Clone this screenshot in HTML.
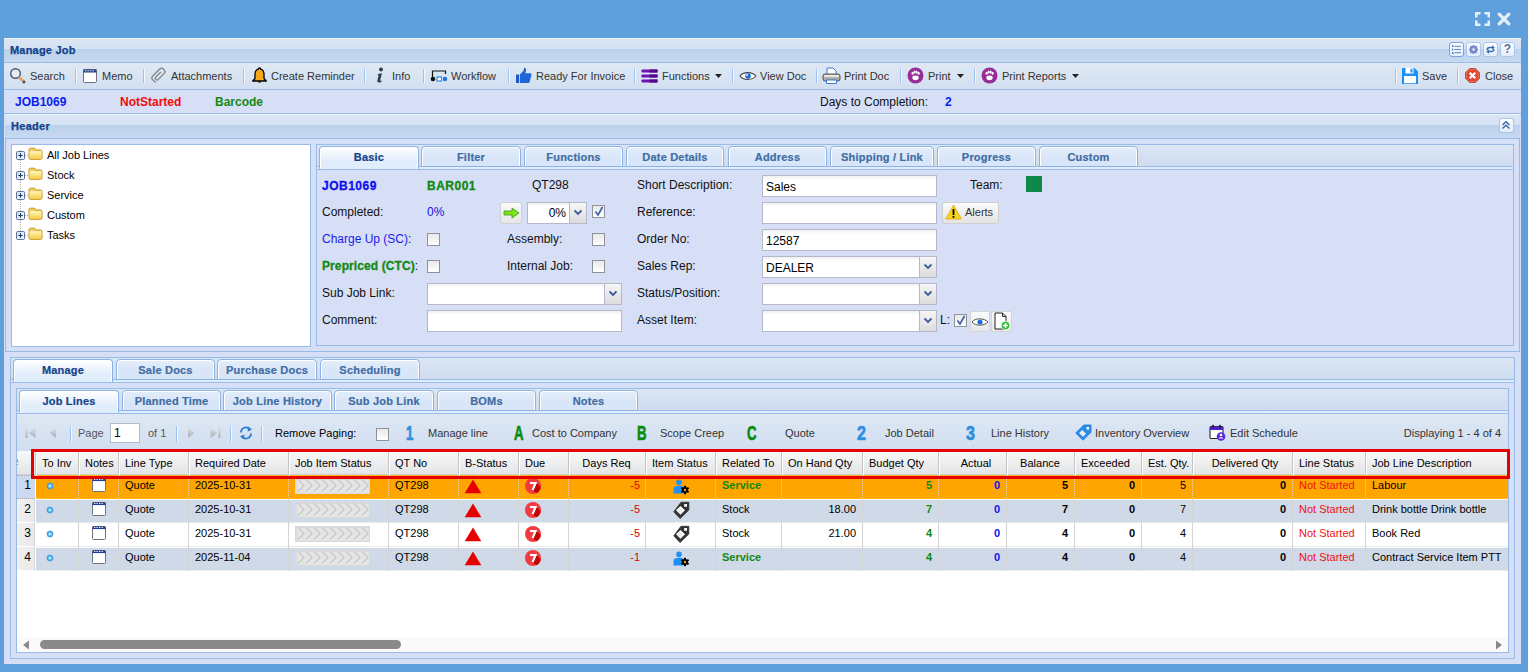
<!DOCTYPE html>
<html><head><meta charset="utf-8"><style>
html,body{margin:0;padding:0;}
body{width:1528px;height:672px;overflow:hidden;position:relative;background:#5fa0dc;font-family:"Liberation Sans",sans-serif;}
</style></head><body>
<svg style="position:absolute;left:1474px;top:11px" width="17" height="16" viewBox="0 0 17 16"><g fill="#e6eff8"><path d="M1 1h5.5v2.5h-3v3h-2.5z"/><path d="M16 1h-5.5v2.5h3v3h2.5z"/><path d="M1 15h5.5v-2.5h-3v-3h-2.5z"/><path d="M16 15h-5.5v-2.5h3v-3h2.5z"/></g></svg><svg style="position:absolute;left:1497px;top:12px" width="14" height="14" viewBox="0 0 14 14"><path d="M2.2 2.2L11.8 11.8M11.8 2.2L2.2 11.8" stroke="#e6eff8" stroke-width="3.2" stroke-linecap="round"/></svg><div style="position:absolute;left:4px;top:38px;width:1517px;height:626px;background:#d6dff6;"></div><div style="position:absolute;left:4px;top:38px;width:1517px;height:25px;background:linear-gradient(#eef4fb 0px,#eef4fb 1px,#dae6f4 1px,#d5e2f2 11px,#bcd1ec 11px,#c6d9f0 24px,#99bbe8 24px);"></div><span style="position:absolute;left:10px;top:43px;font-size:11px;line-height:14px;color:#15428b;font-weight:bold;white-space:nowrap;letter-spacing:0.2px;-webkit-text-stroke:0.25px #15428b;">Manage Job</span><div style="position:absolute;left:1449px;top:42px;width:13px;height:13px;border:1px solid #7aa5dc;border-radius:3px;background:linear-gradient(#fbfdff,#e3eefb);"></div><div style="position:absolute;left:1466px;top:42px;width:13px;height:13px;border:1px solid #a9c6ec;border-radius:3px;background:linear-gradient(#fbfdff,#e3eefb);"></div><div style="position:absolute;left:1483px;top:42px;width:13px;height:13px;border:1px solid #a9c6ec;border-radius:3px;background:linear-gradient(#fbfdff,#e3eefb);"></div><div style="position:absolute;left:1500px;top:42px;width:13px;height:13px;border:1px solid #a9c6ec;border-radius:3px;background:linear-gradient(#fbfdff,#e3eefb);"></div><svg style="position:absolute;left:1451px;top:44px" width="11" height="11" viewBox="0 0 11 11"><g fill="#4a7cc0"><rect x="1" y="1" width="1.2" height="2"/><rect x="1" y="4.5" width="1.2" height="2"/><rect x="1" y="8" width="1.2" height="2"/><rect x="1" y="1.5" width="1.5" height="1"/><rect x="1" y="9" width="1.5" height="1"/></g><g fill="#5a88c8"><rect x="3.5" y="1.8" width="6.5" height="1"/><rect x="3.5" y="5" width="6.5" height="1"/><rect x="3.5" y="8.2" width="6.5" height="1"/></g></svg><svg style="position:absolute;left:1468px;top:44px" width="11" height="11" viewBox="0 0 11 11"><g transform="translate(5.5,5.5)"><circle r="3.3" fill="#7f8ed3"/><g fill="#7f8ed3"><rect x="-1" y="-4.5" width="2" height="2" transform="rotate(0)"/><rect x="-1" y="-4.5" width="2" height="2" transform="rotate(45)"/><rect x="-1" y="-4.5" width="2" height="2" transform="rotate(90)"/><rect x="-1" y="-4.5" width="2" height="2" transform="rotate(135)"/><rect x="-1" y="-4.5" width="2" height="2" transform="rotate(180)"/><rect x="-1" y="-4.5" width="2" height="2" transform="rotate(225)"/><rect x="-1" y="-4.5" width="2" height="2" transform="rotate(270)"/><rect x="-1" y="-4.5" width="2" height="2" transform="rotate(315)"/></g><circle r="1.2" fill="#e8efff"/><circle r="3.3" fill="none" stroke="#6272b8" stroke-width="0.5"/></g></svg><svg style="position:absolute;left:1485px;top:44px" width="11" height="11" viewBox="0 0 11 11"><g fill="none" stroke="#3d6aa8" stroke-width="1.3"><path d="M2 6 C2 4 3 3.5 5 3.5 H7.5"/><path d="M9 5 C9 7 8 7.5 6 7.5 H3.5"/></g><path d="M7 1.3 L9.8 3.5 L7 5.7z" fill="#3d6aa8"/><path d="M4 5.3 L1.2 7.5 L4 9.7z" fill="#3d6aa8"/></svg><span style="position:absolute;left:1501px;top:41px;width:13px;text-align:center;font-size:12px;line-height:16px;font-weight:bold;color:#4e73a8">?</span><div style="position:absolute;left:4px;top:63px;width:1517px;height:27px;background:linear-gradient(#dfe9f5,#d2dff0 26px,#99bbe8 26px);"></div><div style="position:absolute;left:4px;top:90px;width:1517px;height:24px;background:linear-gradient(#d6dff6 23px,#99bbe8 23px);"></div><div style="position:absolute;left:5px;top:114px;width:1515px;height:238px;border-left:1px solid #99bbe8;border-right:1px solid #99bbe8;border-bottom:1px solid #99bbe8;box-sizing:border-box;"></div><div style="position:absolute;left:5px;top:114px;width:1515px;height:25px;background:linear-gradient(#eef4fb 0px,#eef4fb 1px,#dae6f4 1px,#d5e2f2 11px,#bcd1ec 11px,#c6d9f0 24px,#99bbe8 24px);"></div><span style="position:absolute;left:11px;top:119px;font-size:11px;line-height:14px;color:#15428b;font-weight:bold;white-space:nowrap;letter-spacing:0.3px;-webkit-text-stroke:0.25px #15428b;">Header</span><div style="position:absolute;left:1499px;top:118px;width:13px;height:13px;border:1px solid #a9c6ec;border-radius:3px;background:linear-gradient(#fbfdff,#e3eefb);"></div><svg style="position:absolute;left:1501px;top:120px" width="10" height="10" viewBox="0 0 10 10"><path d="M1.5 5 L5 1.8 L8.5 5 M1.5 8.5 L5 5.3 L8.5 8.5" fill="none" stroke="#3f6ba6" stroke-width="1.5"/></svg><svg style="position:absolute;left:9px;top:67px" width="18" height="18" viewBox="0 0 18 18"><circle cx="6.5" cy="6.5" r="4.8" fill="#e8ecf2" stroke="#41577e" stroke-width="1.4"/><path d="M10 10 L15.5 15.5" stroke="#e2a65c" stroke-width="2.6" stroke-linecap="butt"/><path d="M14.2 14.2 L15.8 15.8" stroke="#3b4c66" stroke-width="2.6"/></svg><span style="position:absolute;left:30px;top:69px;font-size:11px;line-height:14px;color:#333333;white-space:nowrap;">Search</span><div style="position:absolute;left:75px;top:69px;width:1px;height:14px;background:#9cc2ef;box-shadow:1px 0 0 #f4f8fd;"></div><svg style="position:absolute;left:83px;top:69px" width="15" height="15" viewBox="0 0 15 15"><rect x="0.5" y="0.5" width="13" height="13" rx="1" fill="#fff" stroke="#6d7077"/><rect x="0.5" y="0.5" width="13" height="3" fill="#1f3f8f"/><g fill="#fff"><rect x="2" y="1.3" width="1.4" height="1"/><rect x="4.5" y="1.3" width="1.4" height="1"/><rect x="7" y="1.3" width="1.4" height="1"/><rect x="9.5" y="1.3" width="1.4" height="1"/></g></svg><span style="position:absolute;left:102px;top:69px;font-size:11px;line-height:14px;color:#333333;white-space:nowrap;">Memo</span><div style="position:absolute;left:143px;top:69px;width:1px;height:14px;background:#9cc2ef;box-shadow:1px 0 0 #f4f8fd;"></div><svg style="position:absolute;left:150px;top:67px" width="18" height="18" viewBox="0 0 18 18"><path d="M5.5 15.5 L2.6 12.6 C1.6 11.6 1.6 10.2 2.6 9.2 L9.8 2 C10.8 1 12.2 1 13.2 2 L14.2 3 C15.2 4 15.2 5.4 14.2 6.4 L8 12.6 C7.4 13.2 6.6 13.2 6 12.6 L5.6 12.2 C5 11.6 5 10.8 5.6 10.2 L11 4.8" fill="none" stroke="#7d7d7d" stroke-width="1.2"/></svg><span style="position:absolute;left:171px;top:69px;font-size:11px;line-height:14px;color:#333333;white-space:nowrap;">Attachments</span><div style="position:absolute;left:243px;top:69px;width:1px;height:14px;background:#9cc2ef;box-shadow:1px 0 0 #f4f8fd;"></div><svg style="position:absolute;left:251px;top:67px" width="17" height="17" viewBox="0 0 17 17"><path d="M8.5 1 C9.3 1 9.7 1.5 9.7 2.2 C12 2.8 13 4.8 13 7.5 L13 11.5 L15.3 14 L1.7 14 L4 11.5 L4 7.5 C4 4.8 5 2.8 7.3 2.2 C7.3 1.5 7.7 1 8.5 1z" fill="#f7a81b" stroke="#000" stroke-width="1.3" stroke-linejoin="round"/><path d="M6.5 14.5 C6.7 16 10.3 16 10.5 14.5z" fill="#000"/></svg><span style="position:absolute;left:271px;top:69px;font-size:11px;line-height:14px;color:#333333;white-space:nowrap;">Create Reminder</span><div style="position:absolute;left:364px;top:69px;width:1px;height:14px;background:#9cc2ef;box-shadow:1px 0 0 #f4f8fd;"></div><svg style="position:absolute;left:375px;top:67px" width="10" height="17" viewBox="0 0 10 17"><circle cx="6" cy="2.6" r="2" fill="#2d3e52"/><path d="M3 7 L7 6.3 L5.2 13 C5 13.8 5.6 14 6.8 13.4 L6.3 14.9 C4.5 16 1.8 15.8 2.3 13.6 L3.7 8.4 L2.8 8.4z" fill="#2d3e52"/></svg><span style="position:absolute;left:392px;top:69px;font-size:11px;line-height:14px;color:#333333;white-space:nowrap;">Info</span><div style="position:absolute;left:423px;top:69px;width:1px;height:14px;background:#9cc2ef;box-shadow:1px 0 0 #f4f8fd;"></div><svg style="position:absolute;left:430px;top:69px" width="18" height="13" viewBox="0 0 18 13"><path d="M2.5 10.5 V2 H15.5 V5" fill="none" stroke="#111" stroke-width="1.2"/><circle cx="3" cy="10" r="2.3" fill="#111"/><rect x="7" y="8" width="4.5" height="4" fill="#fff" stroke="#2d8fe6" stroke-width="1.2"/><circle cx="15" cy="10" r="2.2" fill="#1f6fdc"/></svg><span style="position:absolute;left:451px;top:69px;font-size:11px;line-height:14px;color:#333333;white-space:nowrap;">Workflow</span><div style="position:absolute;left:508px;top:69px;width:1px;height:14px;background:#9cc2ef;box-shadow:1px 0 0 #f4f8fd;"></div><svg style="position:absolute;left:515px;top:67px" width="18" height="17" viewBox="0 0 18 17"><rect x="1" y="7.5" width="3.2" height="8.5" fill="#1a5ccf"/><path d="M5 7.5 L8.5 3.5 L9.2 0.8 C10.6 0.6 11.4 1.8 11 3.8 L10.3 6.3 L15.2 6.3 C16.3 6.3 16.8 7.3 16.4 8.3 L14.6 15 C14.3 15.8 13.8 16 13 16 L5 16z" fill="#1f66da"/></svg><span style="position:absolute;left:536px;top:69px;font-size:11px;line-height:14px;color:#333333;white-space:nowrap;">Ready For Invoice</span><div style="position:absolute;left:634px;top:69px;width:1px;height:14px;background:#9cc2ef;box-shadow:1px 0 0 #f4f8fd;"></div><svg style="position:absolute;left:641px;top:69px" width="17" height="14" viewBox="0 0 17 14"><g fill="#7311b5"><rect x="0.5" y="0.5" width="16" height="3" rx="0.8"/><rect x="0.5" y="5.5" width="16" height="3" rx="0.8"/><rect x="0.5" y="10.5" width="16" height="3" rx="0.8"/></g><g fill="#4d0a85"><rect x="8.5" y="0.5" width="8" height="3"/><rect x="8.5" y="5.5" width="8" height="3"/><rect x="8.5" y="10.5" width="8" height="3"/></g></svg><span style="position:absolute;left:662px;top:69px;font-size:11px;line-height:14px;color:#333333;white-space:nowrap;">Functions</span><svg style="position:absolute;left:715px;top:74px" width="7" height="4" viewBox="0 0 7 4"><path d="M0 0 H7 L3.5 4z" fill="#222"/></svg><div style="position:absolute;left:732px;top:69px;width:1px;height:14px;background:#9cc2ef;box-shadow:1px 0 0 #f4f8fd;"></div><svg style="position:absolute;left:739px;top:71px" width="18" height="10" viewBox="0 0 18 10"><path d="M1 5 C4 0.5 13 0.5 17 5 C13 9.5 4 9.5 1 5z" fill="#fff" stroke="#444" stroke-width="1.1"/><circle cx="9" cy="5" r="2.8" fill="#1c70d8"/><circle cx="8" cy="4" r="0.9" fill="#fff"/></svg><span style="position:absolute;left:760px;top:69px;font-size:11px;line-height:14px;color:#333333;white-space:nowrap;">View Doc</span><div style="position:absolute;left:816px;top:69px;width:1px;height:14px;background:#9cc2ef;box-shadow:1px 0 0 #f4f8fd;"></div><svg style="position:absolute;left:822px;top:67px" width="19" height="18" viewBox="0 0 19 18"><path d="M5 1 H11 L14 4 V8 H5z" fill="#fff" stroke="#3b7bd0" stroke-width="1"/><rect x="1" y="7" width="17" height="7" rx="2" fill="#a9a9a9" stroke="#555" stroke-width="1"/><rect x="2" y="8" width="15" height="2.2" fill="#e7e7e7"/><path d="M4.5 13 H14.5 V16.5 H4.5z" fill="#fff" stroke="#3b7bd0" stroke-width="1"/></svg><span style="position:absolute;left:844px;top:69px;font-size:11px;line-height:14px;color:#333333;white-space:nowrap;">Print Doc</span><div style="position:absolute;left:900px;top:69px;width:1px;height:14px;background:#9cc2ef;box-shadow:1px 0 0 #f4f8fd;"></div><svg style="position:absolute;left:907px;top:67px" width="17" height="17" viewBox="0 0 17 17"><circle cx="8.5" cy="8.5" r="8" fill="#962d98"/><g fill="#fff"><ellipse cx="8.5" cy="10.8" rx="3.2" ry="2.4"/><ellipse cx="5.6" cy="6.2" rx="1.1" ry="1.5"/><ellipse cx="7.6" cy="4.9" rx="1.1" ry="1.5"/><ellipse cx="9.6" cy="4.9" rx="1.1" ry="1.5"/><ellipse cx="11.6" cy="6.2" rx="1.1" ry="1.5"/></g></svg><span style="position:absolute;left:928px;top:69px;font-size:11px;line-height:14px;color:#333333;white-space:nowrap;">Print</span><svg style="position:absolute;left:957px;top:74px" width="7" height="4" viewBox="0 0 7 4"><path d="M0 0 H7 L3.5 4z" fill="#222"/></svg><div style="position:absolute;left:974px;top:69px;width:1px;height:14px;background:#9cc2ef;box-shadow:1px 0 0 #f4f8fd;"></div><svg style="position:absolute;left:981px;top:67px" width="17" height="17" viewBox="0 0 17 17"><circle cx="8.5" cy="8.5" r="8" fill="#962d98"/><g fill="#fff"><ellipse cx="8.5" cy="10.8" rx="3.2" ry="2.4"/><ellipse cx="5.6" cy="6.2" rx="1.1" ry="1.5"/><ellipse cx="7.6" cy="4.9" rx="1.1" ry="1.5"/><ellipse cx="9.6" cy="4.9" rx="1.1" ry="1.5"/><ellipse cx="11.6" cy="6.2" rx="1.1" ry="1.5"/></g></svg><span style="position:absolute;left:1002px;top:69px;font-size:11px;line-height:14px;color:#333333;white-space:nowrap;">Print Reports</span><svg style="position:absolute;left:1072px;top:74px" width="7" height="4" viewBox="0 0 7 4"><path d="M0 0 H7 L3.5 4z" fill="#222"/></svg><div style="position:absolute;left:1395px;top:69px;width:1px;height:14px;background:#9cc2ef;box-shadow:1px 0 0 #f4f8fd;"></div><svg style="position:absolute;left:1401px;top:67px" width="18" height="18" viewBox="0 0 18 18"><path d="M1 1 H13.5 L17 4.5 V17 H1z" fill="#1e8ff5"/><rect x="3" y="9" width="12" height="7.2" fill="#fff"/><rect x="4.5" y="1" width="8" height="5.5" fill="#fff"/><rect x="9.5" y="1.8" width="2" height="3.8" fill="#1e8ff5"/></svg><span style="position:absolute;left:1422px;top:69px;font-size:11px;line-height:14px;color:#333333;white-space:nowrap;">Save</span><div style="position:absolute;left:1457px;top:69px;width:1px;height:14px;background:#9cc2ef;box-shadow:1px 0 0 #f4f8fd;"></div><svg style="position:absolute;left:1465px;top:68px" width="16" height="16" viewBox="0 0 16 16"><path d="M4.6 0.6 H10.4 L14.4 4.6 V10.4 L10.4 14.4 H4.6 L0.6 10.4 V4.6z" fill="#e2442f" stroke="#b83a2c" stroke-width="0.9"/><path d="M4.6 1.6 H10.4 L13.4 4.6 V10.4 L10.4 13.4 H4.6 L1.6 10.4 V4.6z" fill="none" stroke="#f59a8a" stroke-width="0.5"/><path d="M4.7 4.7 L10.3 10.3 M10.3 4.7 L4.7 10.3" stroke="#fff" stroke-width="2.3"/></svg><span style="position:absolute;left:1485px;top:69px;font-size:11px;line-height:14px;color:#333333;white-space:nowrap;">Close</span><span style="position:absolute;left:15px;top:95px;font-size:12px;line-height:14px;color:#0b1cf5;font-weight:bold;white-space:nowrap;">JOB1069</span><span style="position:absolute;left:120px;top:95px;font-size:12px;line-height:14px;color:#f50a0a;font-weight:bold;white-space:nowrap;">NotStarted</span><span style="position:absolute;left:215px;top:95px;font-size:12px;line-height:14px;color:#138a13;font-weight:bold;white-space:nowrap;">Barcode</span><span style="position:absolute;left:820px;top:95px;font-size:12px;line-height:14px;color:#111;white-space:nowrap;">Days to Completion:</span><span style="position:absolute;left:945px;top:95px;font-size:12px;line-height:14px;color:#0b1cf5;font-weight:bold;white-space:nowrap;">2</span><div style="position:absolute;left:11px;top:144px;width:300px;height:203px;background:#fff;border:1px solid #99bbe8;box-sizing:border-box;"></div><div style="position:absolute;left:20px;top:150px;width:1px;height:82px;background:repeating-linear-gradient(#b0b0b0 0 1px,transparent 1px 2px);"></div><div style="position:absolute;left:25px;top:155px;width:3px;height:1px;background:repeating-linear-gradient(90deg,#b0b0b0 0 1px,transparent 1px 2px);"></div><svg style="position:absolute;left:16px;top:151px" width="9" height="9" viewBox="0 0 9 9"><defs><linearGradient id="pg" x1="0" y1="0" x2="1" y2="1"><stop offset="0" stop-color="#c9d8ee"/><stop offset="1" stop-color="#ffffff"/></linearGradient></defs><rect x="0.5" y="0.5" width="8" height="8" rx="1.2" fill="url(#pg)" stroke="#5d7394"/><path d="M2.3 4.5 H6.7 M4.5 2.3 V6.7" stroke="#1f3a66" stroke-width="1.1"/></svg><svg style="position:absolute;left:28px;top:147px" width="15" height="13" viewBox="0 0 15 13"><defs><linearGradient id="fg" x1="0" y1="0" x2="0" y2="1"><stop offset="0" stop-color="#fff2b0"/><stop offset="1" stop-color="#f7cd45"/></linearGradient></defs><path d="M1 3 C1 2 1.5 1.2 2.5 1.2 H6 C6.8 1.2 7.2 1.6 7.5 2.4 L7.8 3 H12.5 C13.4 3 14 3.6 14 4.5 V11 C14 11.8 13.5 12.3 12.7 12.3 H2.3 C1.5 12.3 1 11.8 1 11z" fill="#f3cf5a" stroke="#c4922a" stroke-width="1"/><path d="M1.5 5 H13.5 V11 C13.5 11.5 13.2 11.8 12.7 11.8 H2.3 C1.8 11.8 1.5 11.5 1.5 11z" fill="url(#fg)"/><path d="M1.5 4.6 H13.5" stroke="#fff6d0" stroke-width="0.8"/></svg><span style="position:absolute;left:47px;top:148px;font-size:11px;line-height:14px;color:#000;white-space:nowrap;">All Job Lines</span><div style="position:absolute;left:25px;top:175px;width:3px;height:1px;background:repeating-linear-gradient(90deg,#b0b0b0 0 1px,transparent 1px 2px);"></div><svg style="position:absolute;left:16px;top:171px" width="9" height="9" viewBox="0 0 9 9"><defs><linearGradient id="pg" x1="0" y1="0" x2="1" y2="1"><stop offset="0" stop-color="#c9d8ee"/><stop offset="1" stop-color="#ffffff"/></linearGradient></defs><rect x="0.5" y="0.5" width="8" height="8" rx="1.2" fill="url(#pg)" stroke="#5d7394"/><path d="M2.3 4.5 H6.7 M4.5 2.3 V6.7" stroke="#1f3a66" stroke-width="1.1"/></svg><svg style="position:absolute;left:28px;top:167px" width="15" height="13" viewBox="0 0 15 13"><defs><linearGradient id="fg" x1="0" y1="0" x2="0" y2="1"><stop offset="0" stop-color="#fff2b0"/><stop offset="1" stop-color="#f7cd45"/></linearGradient></defs><path d="M1 3 C1 2 1.5 1.2 2.5 1.2 H6 C6.8 1.2 7.2 1.6 7.5 2.4 L7.8 3 H12.5 C13.4 3 14 3.6 14 4.5 V11 C14 11.8 13.5 12.3 12.7 12.3 H2.3 C1.5 12.3 1 11.8 1 11z" fill="#f3cf5a" stroke="#c4922a" stroke-width="1"/><path d="M1.5 5 H13.5 V11 C13.5 11.5 13.2 11.8 12.7 11.8 H2.3 C1.8 11.8 1.5 11.5 1.5 11z" fill="url(#fg)"/><path d="M1.5 4.6 H13.5" stroke="#fff6d0" stroke-width="0.8"/></svg><span style="position:absolute;left:47px;top:168px;font-size:11px;line-height:14px;color:#000;white-space:nowrap;">Stock</span><div style="position:absolute;left:25px;top:195px;width:3px;height:1px;background:repeating-linear-gradient(90deg,#b0b0b0 0 1px,transparent 1px 2px);"></div><svg style="position:absolute;left:16px;top:191px" width="9" height="9" viewBox="0 0 9 9"><defs><linearGradient id="pg" x1="0" y1="0" x2="1" y2="1"><stop offset="0" stop-color="#c9d8ee"/><stop offset="1" stop-color="#ffffff"/></linearGradient></defs><rect x="0.5" y="0.5" width="8" height="8" rx="1.2" fill="url(#pg)" stroke="#5d7394"/><path d="M2.3 4.5 H6.7 M4.5 2.3 V6.7" stroke="#1f3a66" stroke-width="1.1"/></svg><svg style="position:absolute;left:28px;top:187px" width="15" height="13" viewBox="0 0 15 13"><defs><linearGradient id="fg" x1="0" y1="0" x2="0" y2="1"><stop offset="0" stop-color="#fff2b0"/><stop offset="1" stop-color="#f7cd45"/></linearGradient></defs><path d="M1 3 C1 2 1.5 1.2 2.5 1.2 H6 C6.8 1.2 7.2 1.6 7.5 2.4 L7.8 3 H12.5 C13.4 3 14 3.6 14 4.5 V11 C14 11.8 13.5 12.3 12.7 12.3 H2.3 C1.5 12.3 1 11.8 1 11z" fill="#f3cf5a" stroke="#c4922a" stroke-width="1"/><path d="M1.5 5 H13.5 V11 C13.5 11.5 13.2 11.8 12.7 11.8 H2.3 C1.8 11.8 1.5 11.5 1.5 11z" fill="url(#fg)"/><path d="M1.5 4.6 H13.5" stroke="#fff6d0" stroke-width="0.8"/></svg><span style="position:absolute;left:47px;top:188px;font-size:11px;line-height:14px;color:#000;white-space:nowrap;">Service</span><div style="position:absolute;left:25px;top:215px;width:3px;height:1px;background:repeating-linear-gradient(90deg,#b0b0b0 0 1px,transparent 1px 2px);"></div><svg style="position:absolute;left:16px;top:211px" width="9" height="9" viewBox="0 0 9 9"><defs><linearGradient id="pg" x1="0" y1="0" x2="1" y2="1"><stop offset="0" stop-color="#c9d8ee"/><stop offset="1" stop-color="#ffffff"/></linearGradient></defs><rect x="0.5" y="0.5" width="8" height="8" rx="1.2" fill="url(#pg)" stroke="#5d7394"/><path d="M2.3 4.5 H6.7 M4.5 2.3 V6.7" stroke="#1f3a66" stroke-width="1.1"/></svg><svg style="position:absolute;left:28px;top:207px" width="15" height="13" viewBox="0 0 15 13"><defs><linearGradient id="fg" x1="0" y1="0" x2="0" y2="1"><stop offset="0" stop-color="#fff2b0"/><stop offset="1" stop-color="#f7cd45"/></linearGradient></defs><path d="M1 3 C1 2 1.5 1.2 2.5 1.2 H6 C6.8 1.2 7.2 1.6 7.5 2.4 L7.8 3 H12.5 C13.4 3 14 3.6 14 4.5 V11 C14 11.8 13.5 12.3 12.7 12.3 H2.3 C1.5 12.3 1 11.8 1 11z" fill="#f3cf5a" stroke="#c4922a" stroke-width="1"/><path d="M1.5 5 H13.5 V11 C13.5 11.5 13.2 11.8 12.7 11.8 H2.3 C1.8 11.8 1.5 11.5 1.5 11z" fill="url(#fg)"/><path d="M1.5 4.6 H13.5" stroke="#fff6d0" stroke-width="0.8"/></svg><span style="position:absolute;left:47px;top:208px;font-size:11px;line-height:14px;color:#000;white-space:nowrap;">Custom</span><div style="position:absolute;left:25px;top:235px;width:3px;height:1px;background:repeating-linear-gradient(90deg,#b0b0b0 0 1px,transparent 1px 2px);"></div><svg style="position:absolute;left:16px;top:231px" width="9" height="9" viewBox="0 0 9 9"><defs><linearGradient id="pg" x1="0" y1="0" x2="1" y2="1"><stop offset="0" stop-color="#c9d8ee"/><stop offset="1" stop-color="#ffffff"/></linearGradient></defs><rect x="0.5" y="0.5" width="8" height="8" rx="1.2" fill="url(#pg)" stroke="#5d7394"/><path d="M2.3 4.5 H6.7 M4.5 2.3 V6.7" stroke="#1f3a66" stroke-width="1.1"/></svg><svg style="position:absolute;left:28px;top:227px" width="15" height="13" viewBox="0 0 15 13"><defs><linearGradient id="fg" x1="0" y1="0" x2="0" y2="1"><stop offset="0" stop-color="#fff2b0"/><stop offset="1" stop-color="#f7cd45"/></linearGradient></defs><path d="M1 3 C1 2 1.5 1.2 2.5 1.2 H6 C6.8 1.2 7.2 1.6 7.5 2.4 L7.8 3 H12.5 C13.4 3 14 3.6 14 4.5 V11 C14 11.8 13.5 12.3 12.7 12.3 H2.3 C1.5 12.3 1 11.8 1 11z" fill="#f3cf5a" stroke="#c4922a" stroke-width="1"/><path d="M1.5 5 H13.5 V11 C13.5 11.5 13.2 11.8 12.7 11.8 H2.3 C1.8 11.8 1.5 11.5 1.5 11z" fill="url(#fg)"/><path d="M1.5 4.6 H13.5" stroke="#fff6d0" stroke-width="0.8"/></svg><span style="position:absolute;left:47px;top:228px;font-size:11px;line-height:14px;color:#000;white-space:nowrap;">Tasks</span><div style="position:absolute;left:316px;top:144px;width:1198px;height:202px;border:1px solid #99bbe8;box-sizing:border-box;background:#d6dff6;"></div><div style="position:absolute;left:317px;top:145px;width:1196px;height:24px;background:linear-gradient(#dbe6f4,#cddbee);"></div><div style="position:absolute;left:317px;top:166px;width:1196px;height:4px;background:#deecfd;border-top:1px solid #99bbe8;border-bottom:1px solid #99bbe8;box-sizing:border-box;"></div><div style="position:absolute;left:319px;top:146px;width:100px;height:23px;background:linear-gradient(#ffffff,#e4eefb 60%,#deecfd);border:1px solid #8db2e3;border-bottom:none;border-radius:4px 4px 0 0;box-sizing:border-box;box-shadow:inset 1px 1px 0 #fff,inset -1px 0 0 #fff;"></div><span style="position:absolute;left:319px;top:150px;width:100px;text-align:center;font-size:11px;line-height:14px;color:#15428b;font-weight:bold;white-space:nowrap;letter-spacing:0.2px;-webkit-text-stroke:0.2px #15428b;">Basic</span><div style="position:absolute;left:421px;top:146px;width:100px;height:21px;background:linear-gradient(#e3edfa,#d9e6f8 60%,#d6e5f8);border:1px solid #8db2e3;border-radius:4px 4px 1px 1px;box-sizing:border-box;box-shadow:inset 1px 1px 0 #fff,inset -1px 0 0 #fff;"></div><span style="position:absolute;left:421px;top:150px;width:100px;text-align:center;font-size:11px;line-height:14px;color:#416da3;font-weight:bold;white-space:nowrap;letter-spacing:0.2px;-webkit-text-stroke:0.2px #416da3;">Filter</span><div style="position:absolute;left:524px;top:146px;width:99px;height:21px;background:linear-gradient(#e3edfa,#d9e6f8 60%,#d6e5f8);border:1px solid #8db2e3;border-radius:4px 4px 1px 1px;box-sizing:border-box;box-shadow:inset 1px 1px 0 #fff,inset -1px 0 0 #fff;"></div><span style="position:absolute;left:524px;top:150px;width:99px;text-align:center;font-size:11px;line-height:14px;color:#416da3;font-weight:bold;white-space:nowrap;letter-spacing:0.2px;-webkit-text-stroke:0.2px #416da3;">Functions</span><div style="position:absolute;left:626px;top:146px;width:98px;height:21px;background:linear-gradient(#e3edfa,#d9e6f8 60%,#d6e5f8);border:1px solid #8db2e3;border-radius:4px 4px 1px 1px;box-sizing:border-box;box-shadow:inset 1px 1px 0 #fff,inset -1px 0 0 #fff;"></div><span style="position:absolute;left:626px;top:150px;width:98px;text-align:center;font-size:11px;line-height:14px;color:#416da3;font-weight:bold;white-space:nowrap;letter-spacing:0.2px;-webkit-text-stroke:0.2px #416da3;">Date Details</span><div style="position:absolute;left:728px;top:146px;width:99px;height:21px;background:linear-gradient(#e3edfa,#d9e6f8 60%,#d6e5f8);border:1px solid #8db2e3;border-radius:4px 4px 1px 1px;box-sizing:border-box;box-shadow:inset 1px 1px 0 #fff,inset -1px 0 0 #fff;"></div><span style="position:absolute;left:728px;top:150px;width:99px;text-align:center;font-size:11px;line-height:14px;color:#416da3;font-weight:bold;white-space:nowrap;letter-spacing:0.2px;-webkit-text-stroke:0.2px #416da3;">Address</span><div style="position:absolute;left:830px;top:146px;width:104px;height:21px;background:linear-gradient(#e3edfa,#d9e6f8 60%,#d6e5f8);border:1px solid #8db2e3;border-radius:4px 4px 1px 1px;box-sizing:border-box;box-shadow:inset 1px 1px 0 #fff,inset -1px 0 0 #fff;"></div><span style="position:absolute;left:830px;top:150px;width:104px;text-align:center;font-size:11px;line-height:14px;color:#416da3;font-weight:bold;white-space:nowrap;letter-spacing:0.2px;-webkit-text-stroke:0.2px #416da3;">Shipping / Link</span><div style="position:absolute;left:937px;top:146px;width:99px;height:21px;background:linear-gradient(#e3edfa,#d9e6f8 60%,#d6e5f8);border:1px solid #8db2e3;border-radius:4px 4px 1px 1px;box-sizing:border-box;box-shadow:inset 1px 1px 0 #fff,inset -1px 0 0 #fff;"></div><span style="position:absolute;left:937px;top:150px;width:99px;text-align:center;font-size:11px;line-height:14px;color:#416da3;font-weight:bold;white-space:nowrap;letter-spacing:0.2px;-webkit-text-stroke:0.2px #416da3;">Progress</span><div style="position:absolute;left:1039px;top:146px;width:99px;height:21px;background:linear-gradient(#e3edfa,#d9e6f8 60%,#d6e5f8);border:1px solid #8db2e3;border-radius:4px 4px 1px 1px;box-sizing:border-box;box-shadow:inset 1px 1px 0 #fff,inset -1px 0 0 #fff;"></div><span style="position:absolute;left:1039px;top:150px;width:99px;text-align:center;font-size:11px;line-height:14px;color:#416da3;font-weight:bold;white-space:nowrap;letter-spacing:0.2px;-webkit-text-stroke:0.2px #416da3;">Custom</span><span style="position:absolute;left:322px;top:179px;font-size:12px;line-height:14px;color:#1010ee;font-weight:bold;white-space:nowrap;letter-spacing:0.5px;-webkit-text-stroke:0.3px #1010ee;">JOB1069</span><span style="position:absolute;left:427px;top:179px;font-size:12px;line-height:14px;color:#118811;font-weight:bold;white-space:nowrap;letter-spacing:0.5px;-webkit-text-stroke:0.3px #118811;">BAR001</span><span style="position:absolute;left:532px;top:178px;font-size:12px;line-height:14px;color:#111;white-space:nowrap;">QT298</span><span style="position:absolute;left:322px;top:205px;font-size:12px;line-height:14px;color:#111;white-space:nowrap;">Completed:</span><span style="position:absolute;left:427px;top:205px;font-size:12px;line-height:14px;color:#1414e6;white-space:nowrap;">0%</span><div style="position:absolute;left:500px;top:202px;width:22px;height:22px;background:linear-gradient(#fafafa,#e6e6e6);border:1px solid #d0d0d0;border-radius:3px;box-sizing:border-box;"></div><svg style="position:absolute;left:503px;top:207px" width="17" height="12" viewBox="0 0 17 12"><path d="M1 4 H9 V1 L16 6 L9 11 V8 H1z" fill="#7ee21b" stroke="#3c9a10" stroke-width="0.8"/></svg><div style="position:absolute;left:527px;top:202px;width:60px;height:22px;background:linear-gradient(#f0f0f0,#fff 4px);border:1px solid #b5b8c8;box-sizing:border-box;"></div><div style="position:absolute;left:569px;top:202px;width:18px;height:22px;background:linear-gradient(#f6f6f6,#dcdcdc);border:1px solid #b5b8c8;box-sizing:border-box;"></div><svg style="position:absolute;left:573px;top:209px" width="10" height="7" viewBox="0 0 10 7"><path d="M1.5 1.5 L5 5 L8.5 1.5" fill="none" stroke="#3c5c9c" stroke-width="1.8"/></svg><span style="position:absolute;right:962px;top:206px;font-size:12px;line-height:14px;color:#000;white-space:nowrap;">0%</span><div style="position:absolute;left:592px;top:205px;width:13px;height:13px;background:linear-gradient(#e8e8e8,#fff);border:1px solid #8e9399;box-sizing:border-box;"></div><svg style="position:absolute;left:594px;top:206px" width="10" height="11" viewBox="0 0 10 11"><path d="M1.5 5.5 L4 9 L8.5 1" fill="none" stroke="#3d5fa6" stroke-width="1.6"/></svg><span style="position:absolute;left:322px;top:232px;font-size:12px;line-height:14px;color:#111;white-space:nowrap;"><span style="color:#1b1bee">Charge Up (SC)</span>:</span><div style="position:absolute;left:427px;top:233px;width:13px;height:13px;background:linear-gradient(#e8e8e8,#fff);border:1px solid #8e9399;box-sizing:border-box;"></div><span style="position:absolute;left:507px;top:232px;font-size:12px;line-height:14px;color:#111;white-space:nowrap;">Assembly:</span><div style="position:absolute;left:592px;top:233px;width:13px;height:13px;background:linear-gradient(#e8e8e8,#fff);border:1px solid #8e9399;box-sizing:border-box;"></div><span style="position:absolute;left:322px;top:259px;font-size:12px;line-height:14px;color:#111;white-space:nowrap;"><b style="color:#138a13;letter-spacing:0.1px;-webkit-text-stroke:0.3px #138a13">Prepriced (CTC)</b>:</span><div style="position:absolute;left:427px;top:260px;width:13px;height:13px;background:linear-gradient(#e8e8e8,#fff);border:1px solid #8e9399;box-sizing:border-box;"></div><span style="position:absolute;left:507px;top:259px;font-size:12px;line-height:14px;color:#111;white-space:nowrap;">Internal Job:</span><div style="position:absolute;left:592px;top:260px;width:13px;height:13px;background:linear-gradient(#e8e8e8,#fff);border:1px solid #8e9399;box-sizing:border-box;"></div><span style="position:absolute;left:322px;top:286px;font-size:12px;line-height:14px;color:#111;white-space:nowrap;">Sub Job Link:</span><div style="position:absolute;left:427px;top:283px;width:195px;height:22px;background:linear-gradient(#f0f0f0,#fff 4px);border:1px solid #b5b8c8;box-sizing:border-box;"></div><div style="position:absolute;left:604px;top:283px;width:18px;height:22px;background:linear-gradient(#f6f6f6,#dcdcdc);border:1px solid #b5b8c8;box-sizing:border-box;"></div><svg style="position:absolute;left:608px;top:290px" width="10" height="7" viewBox="0 0 10 7"><path d="M1.5 1.5 L5 5 L8.5 1.5" fill="none" stroke="#3c5c9c" stroke-width="1.8"/></svg><span style="position:absolute;left:322px;top:313px;font-size:12px;line-height:14px;color:#111;white-space:nowrap;">Comment:</span><div style="position:absolute;left:427px;top:310px;width:195px;height:22px;background:linear-gradient(#f0f0f0,#fff 4px);border:1px solid #b5b8c8;box-sizing:border-box;"></div><span style="position:absolute;left:637px;top:178px;font-size:12px;line-height:14px;color:#111;white-space:nowrap;">Short Description:</span><div style="position:absolute;left:762px;top:175px;width:175px;height:22px;background:linear-gradient(#f0f0f0,#fff 4px);border:1px solid #b5b8c8;box-sizing:border-box;"></div><span style="position:absolute;left:766px;top:180px;font-size:12px;line-height:14px;color:#000;white-space:nowrap;">Sales</span><span style="position:absolute;left:970px;top:178px;font-size:12px;line-height:14px;color:#111;white-space:nowrap;">Team:</span><div style="position:absolute;left:1026px;top:176px;width:16px;height:16px;background:#0e8a48;"></div><span style="position:absolute;left:637px;top:205px;font-size:12px;line-height:14px;color:#111;white-space:nowrap;">Reference:</span><div style="position:absolute;left:762px;top:202px;width:175px;height:22px;background:linear-gradient(#f0f0f0,#fff 4px);border:1px solid #b5b8c8;box-sizing:border-box;"></div><div style="position:absolute;left:942px;top:202px;width:57px;height:22px;background:linear-gradient(#fbfbfb,#e3e3e3);border:1px solid #cfcfcf;border-radius:2px;box-sizing:border-box;"></div><svg style="position:absolute;left:945px;top:204px" width="17" height="16" viewBox="0 0 17 16"><path d="M8.5 1 L16.3 15 H0.7z" fill="#f7d51d" stroke="#e0a800" stroke-width="0.8" stroke-linejoin="round"/><rect x="7.6" y="5" width="1.8" height="6" fill="#000"/><rect x="7.6" y="12" width="1.8" height="1.8" fill="#000"/></svg><span style="position:absolute;left:965px;top:205px;font-size:11px;line-height:14px;color:#333;white-space:nowrap;">Alerts</span><span style="position:absolute;left:637px;top:232px;font-size:12px;line-height:14px;color:#111;white-space:nowrap;">Order No:</span><div style="position:absolute;left:762px;top:229px;width:175px;height:22px;background:linear-gradient(#f0f0f0,#fff 4px);border:1px solid #b5b8c8;box-sizing:border-box;"></div><span style="position:absolute;left:766px;top:234px;font-size:12px;line-height:14px;color:#000;white-space:nowrap;">12587</span><span style="position:absolute;left:637px;top:259px;font-size:12px;line-height:14px;color:#111;white-space:nowrap;">Sales Rep:</span><div style="position:absolute;left:762px;top:256px;width:175px;height:22px;background:linear-gradient(#f0f0f0,#fff 4px);border:1px solid #b5b8c8;box-sizing:border-box;"></div><span style="position:absolute;left:766px;top:261px;font-size:12px;line-height:14px;color:#000;white-space:nowrap;">DEALER</span><div style="position:absolute;left:919px;top:256px;width:18px;height:22px;background:linear-gradient(#f6f6f6,#dcdcdc);border:1px solid #b5b8c8;box-sizing:border-box;"></div><svg style="position:absolute;left:923px;top:263px" width="10" height="7" viewBox="0 0 10 7"><path d="M1.5 1.5 L5 5 L8.5 1.5" fill="none" stroke="#3c5c9c" stroke-width="1.8"/></svg><span style="position:absolute;left:637px;top:286px;font-size:12px;line-height:14px;color:#111;white-space:nowrap;">Status/Position:</span><div style="position:absolute;left:762px;top:283px;width:175px;height:22px;background:linear-gradient(#f0f0f0,#fff 4px);border:1px solid #b5b8c8;box-sizing:border-box;"></div><div style="position:absolute;left:919px;top:283px;width:18px;height:22px;background:linear-gradient(#f6f6f6,#dcdcdc);border:1px solid #b5b8c8;box-sizing:border-box;"></div><svg style="position:absolute;left:923px;top:290px" width="10" height="7" viewBox="0 0 10 7"><path d="M1.5 1.5 L5 5 L8.5 1.5" fill="none" stroke="#3c5c9c" stroke-width="1.8"/></svg><span style="position:absolute;left:637px;top:313px;font-size:12px;line-height:14px;color:#111;white-space:nowrap;">Asset Item:</span><div style="position:absolute;left:762px;top:310px;width:175px;height:22px;background:linear-gradient(#f0f0f0,#fff 4px);border:1px solid #b5b8c8;box-sizing:border-box;"></div><div style="position:absolute;left:919px;top:310px;width:18px;height:22px;background:linear-gradient(#f6f6f6,#dcdcdc);border:1px solid #b5b8c8;box-sizing:border-box;"></div><svg style="position:absolute;left:923px;top:317px" width="10" height="7" viewBox="0 0 10 7"><path d="M1.5 1.5 L5 5 L8.5 1.5" fill="none" stroke="#3c5c9c" stroke-width="1.8"/></svg><span style="position:absolute;left:940px;top:313px;font-size:12px;line-height:14px;color:#111;white-space:nowrap;">L:</span><div style="position:absolute;left:954px;top:314px;width:13px;height:13px;background:linear-gradient(#e8e8e8,#fff);border:1px solid #8e9399;box-sizing:border-box;"></div><svg style="position:absolute;left:956px;top:315px" width="10" height="11" viewBox="0 0 10 11"><path d="M1.5 5.5 L4 9 L8.5 1" fill="none" stroke="#3d5fa6" stroke-width="1.6"/></svg><div style="position:absolute;left:970px;top:311px;width:20px;height:21px;background:linear-gradient(#fbfbfb,#e6e6e6);border:1px solid #d4d4d4;border-radius:2px;box-sizing:border-box;"></div><svg style="position:absolute;left:971px;top:317px" width="18" height="10" viewBox="0 0 18 10"><path d="M1 5 C4 0.8 13 0.8 17 5 C13 9.2 4 9.2 1 5z" fill="#fff" stroke="#555" stroke-width="1"/><circle cx="9" cy="5" r="2.6" fill="#1c70d8"/></svg><div style="position:absolute;left:991px;top:311px;width:21px;height:21px;background:linear-gradient(#fbfbfb,#e6e6e6);border:1px solid #d4d4d4;border-radius:2px;box-sizing:border-box;"></div><svg style="position:absolute;left:993px;top:312px" width="18" height="19" viewBox="0 0 18 19"><path d="M2 1 H9.5 L13 4.5 V17 H2z" fill="#fff" stroke="#222" stroke-width="1"/><path d="M9.5 1 V4.5 H13" fill="none" stroke="#222" stroke-width="1"/><circle cx="12.5" cy="13.5" r="4.3" fill="#2eb82e" stroke="#fff" stroke-width="0.8"/><path d="M12.5 11 V16 M10 13.5 H15" stroke="#fff" stroke-width="1.6"/></svg><div style="position:absolute;left:10px;top:357px;width:1505px;height:302px;border:1px solid #99bbe8;box-sizing:border-box;background:#d6dff6;"></div><div style="position:absolute;left:11px;top:358px;width:1503px;height:24px;background:linear-gradient(#dbe6f4,#cddbee);"></div><div style="position:absolute;left:11px;top:379px;width:1503px;height:4px;background:#deecfd;border-top:1px solid #99bbe8;border-bottom:1px solid #99bbe8;box-sizing:border-box;"></div><div style="position:absolute;left:13px;top:359px;width:100px;height:23px;background:linear-gradient(#ffffff,#e4eefb 60%,#deecfd);border:1px solid #8db2e3;border-bottom:none;border-radius:4px 4px 0 0;box-sizing:border-box;box-shadow:inset 1px 1px 0 #fff,inset -1px 0 0 #fff;"></div><span style="position:absolute;left:13px;top:363px;width:100px;text-align:center;font-size:11px;line-height:14px;color:#15428b;font-weight:bold;white-space:nowrap;letter-spacing:0.2px;-webkit-text-stroke:0.2px #15428b;">Manage</span><div style="position:absolute;left:116px;top:359px;width:99px;height:21px;background:linear-gradient(#e3edfa,#d9e6f8 60%,#d6e5f8);border:1px solid #8db2e3;border-radius:4px 4px 1px 1px;box-sizing:border-box;box-shadow:inset 1px 1px 0 #fff,inset -1px 0 0 #fff;"></div><span style="position:absolute;left:116px;top:363px;width:99px;text-align:center;font-size:11px;line-height:14px;color:#416da3;font-weight:bold;white-space:nowrap;letter-spacing:0.2px;-webkit-text-stroke:0.2px #416da3;">Sale Docs</span><div style="position:absolute;left:217px;top:359px;width:100px;height:21px;background:linear-gradient(#e3edfa,#d9e6f8 60%,#d6e5f8);border:1px solid #8db2e3;border-radius:4px 4px 1px 1px;box-sizing:border-box;box-shadow:inset 1px 1px 0 #fff,inset -1px 0 0 #fff;"></div><span style="position:absolute;left:217px;top:363px;width:100px;text-align:center;font-size:11px;line-height:14px;color:#416da3;font-weight:bold;white-space:nowrap;letter-spacing:0.2px;-webkit-text-stroke:0.2px #416da3;">Purchase Docs</span><div style="position:absolute;left:320px;top:359px;width:100px;height:21px;background:linear-gradient(#e3edfa,#d9e6f8 60%,#d6e5f8);border:1px solid #8db2e3;border-radius:4px 4px 1px 1px;box-sizing:border-box;box-shadow:inset 1px 1px 0 #fff,inset -1px 0 0 #fff;"></div><span style="position:absolute;left:320px;top:363px;width:100px;text-align:center;font-size:11px;line-height:14px;color:#416da3;font-weight:bold;white-space:nowrap;letter-spacing:0.2px;-webkit-text-stroke:0.2px #416da3;">Scheduling</span><div style="position:absolute;left:16px;top:388px;width:1493px;height:265px;border:1px solid #99bbe8;box-sizing:border-box;background:#fff;"></div><div style="position:absolute;left:17px;top:389px;width:1491px;height:23px;background:linear-gradient(#dbe6f4,#cddbee);"></div><div style="position:absolute;left:17px;top:410px;width:1491px;height:4px;background:#deecfd;border-top:1px solid #99bbe8;border-bottom:1px solid #99bbe8;box-sizing:border-box;"></div><div style="position:absolute;left:19px;top:390px;width:100px;height:23px;background:linear-gradient(#ffffff,#e4eefb 60%,#deecfd);border:1px solid #8db2e3;border-bottom:none;border-radius:4px 4px 0 0;box-sizing:border-box;box-shadow:inset 1px 1px 0 #fff,inset -1px 0 0 #fff;"></div><span style="position:absolute;left:19px;top:394px;width:100px;text-align:center;font-size:11px;line-height:14px;color:#15428b;font-weight:bold;white-space:nowrap;letter-spacing:0.2px;-webkit-text-stroke:0.2px #15428b;">Job Lines</span><div style="position:absolute;left:122px;top:390px;width:99px;height:21px;background:linear-gradient(#e3edfa,#d9e6f8 60%,#d6e5f8);border:1px solid #8db2e3;border-radius:4px 4px 1px 1px;box-sizing:border-box;box-shadow:inset 1px 1px 0 #fff,inset -1px 0 0 #fff;"></div><span style="position:absolute;left:122px;top:394px;width:99px;text-align:center;font-size:11px;line-height:14px;color:#416da3;font-weight:bold;white-space:nowrap;letter-spacing:0.2px;-webkit-text-stroke:0.2px #416da3;">Planned Time</span><div style="position:absolute;left:223px;top:390px;width:109px;height:21px;background:linear-gradient(#e3edfa,#d9e6f8 60%,#d6e5f8);border:1px solid #8db2e3;border-radius:4px 4px 1px 1px;box-sizing:border-box;box-shadow:inset 1px 1px 0 #fff,inset -1px 0 0 #fff;"></div><span style="position:absolute;left:223px;top:394px;width:109px;text-align:center;font-size:11px;line-height:14px;color:#416da3;font-weight:bold;white-space:nowrap;letter-spacing:0.2px;-webkit-text-stroke:0.2px #416da3;">Job Line History</span><div style="position:absolute;left:334px;top:390px;width:100px;height:21px;background:linear-gradient(#e3edfa,#d9e6f8 60%,#d6e5f8);border:1px solid #8db2e3;border-radius:4px 4px 1px 1px;box-sizing:border-box;box-shadow:inset 1px 1px 0 #fff,inset -1px 0 0 #fff;"></div><span style="position:absolute;left:334px;top:394px;width:100px;text-align:center;font-size:11px;line-height:14px;color:#416da3;font-weight:bold;white-space:nowrap;letter-spacing:0.2px;-webkit-text-stroke:0.2px #416da3;">Sub Job Link</span><div style="position:absolute;left:437px;top:390px;width:99px;height:21px;background:linear-gradient(#e3edfa,#d9e6f8 60%,#d6e5f8);border:1px solid #8db2e3;border-radius:4px 4px 1px 1px;box-sizing:border-box;box-shadow:inset 1px 1px 0 #fff,inset -1px 0 0 #fff;"></div><span style="position:absolute;left:437px;top:394px;width:99px;text-align:center;font-size:11px;line-height:14px;color:#416da3;font-weight:bold;white-space:nowrap;letter-spacing:0.2px;-webkit-text-stroke:0.2px #416da3;">BOMs</span><div style="position:absolute;left:539px;top:390px;width:99px;height:21px;background:linear-gradient(#e3edfa,#d9e6f8 60%,#d6e5f8);border:1px solid #8db2e3;border-radius:4px 4px 1px 1px;box-sizing:border-box;box-shadow:inset 1px 1px 0 #fff,inset -1px 0 0 #fff;"></div><span style="position:absolute;left:539px;top:394px;width:99px;text-align:center;font-size:11px;line-height:14px;color:#416da3;font-weight:bold;white-space:nowrap;letter-spacing:0.2px;-webkit-text-stroke:0.2px #416da3;">Notes</span><div style="position:absolute;left:17px;top:414px;width:1491px;height:37px;background:linear-gradient(#dde8f4,#d1def0);"></div><svg style="position:absolute;left:24px;top:426px" width="14" height="14" viewBox="0 0 14 14"><defs><linearGradient id="gg" x1="0" y1="0" x2="0" y2="1"><stop offset="0" stop-color="#d9dde3"/><stop offset="1" stop-color="#aab0b8"/></linearGradient></defs><rect x="1.5" y="2" width="2" height="10" fill="url(#gg)"/><path d="M11.5 2 L4.5 7 L11.5 12z" fill="url(#gg)"/></svg><svg style="position:absolute;left:48px;top:426px" width="10" height="14" viewBox="0 0 10 14"><path d="M8 2 L1.5 7 L8 12z" fill="url(#gg)"/></svg><div style="position:absolute;left:70px;top:426px;width:1px;height:16px;background:#9cc2ef;box-shadow:1px 0 0 #f4f8fd;"></div><span style="position:absolute;left:78px;top:426px;font-size:11px;line-height:14px;color:#555;white-space:nowrap;">Page</span><div style="position:absolute;left:110px;top:423px;width:30px;height:20px;background:#fff;border:1px solid #b5b8c8;box-sizing:border-box;"></div><span style="position:absolute;left:114px;top:426px;font-size:12px;line-height:14px;color:#000;white-space:nowrap;">1</span><span style="position:absolute;left:148px;top:426px;font-size:11px;line-height:14px;color:#555;white-space:nowrap;">of 1</span><div style="position:absolute;left:176px;top:426px;width:1px;height:16px;background:#9cc2ef;box-shadow:1px 0 0 #f4f8fd;"></div><svg style="position:absolute;left:186px;top:426px" width="10" height="14" viewBox="0 0 10 14"><path d="M2 2 L8.5 7 L2 12z" fill="url(#gg)"/></svg><svg style="position:absolute;left:208px;top:426px" width="14" height="14" viewBox="0 0 14 14"><path d="M2.5 2 L9.5 7 L2.5 12z" fill="url(#gg)"/><rect x="10.5" y="2" width="2" height="10" fill="url(#gg)"/></svg><div style="position:absolute;left:230px;top:426px;width:1px;height:16px;background:#9cc2ef;box-shadow:1px 0 0 #f4f8fd;"></div><svg style="position:absolute;left:238px;top:425px" width="16" height="16" viewBox="0 0 16 16"><path d="M3 7.5 A5 5 0 0 1 12 4.5" fill="none" stroke="#2b7ad6" stroke-width="1.8"/><path d="M10 1.5 L14 4.8 L9.6 6.6z" fill="#2b7ad6"/><path d="M13 8.5 A5 5 0 0 1 4 11.5" fill="none" stroke="#2b7ad6" stroke-width="1.8"/><path d="M6 14.5 L2 11.2 L6.4 9.4z" fill="#2b7ad6"/></svg><div style="position:absolute;left:261px;top:426px;width:1px;height:16px;background:#9cc2ef;box-shadow:1px 0 0 #f4f8fd;"></div><span style="position:absolute;left:275px;top:426px;font-size:11px;line-height:14px;color:#000;white-space:nowrap;">Remove Paging:</span><div style="position:absolute;left:376px;top:428px;width:13px;height:13px;background:linear-gradient(#e8e8e8,#fff);border:1px solid #8e9399;box-sizing:border-box;"></div><span style="position:absolute;left:406px;top:422px;font-size:20px;line-height:22px;font-weight:bold;color:#2f8fdf;-webkit-text-stroke:0.7px #2f8fdf;transform:scaleX(0.66);transform-origin:0 0;">1</span><span style="position:absolute;left:428px;top:426px;font-size:11px;line-height:14px;color:#333;white-space:nowrap;">Manage line</span><span style="position:absolute;left:514px;top:422px;font-size:20px;line-height:22px;font-weight:bold;color:#0c8a0c;-webkit-text-stroke:0.7px #0c8a0c;transform:scaleX(0.66);transform-origin:0 0;">A</span><span style="position:absolute;left:532px;top:426px;font-size:11px;line-height:14px;color:#333;white-space:nowrap;">Cost to Company</span><span style="position:absolute;left:637px;top:422px;font-size:20px;line-height:22px;font-weight:bold;color:#0c8a0c;-webkit-text-stroke:0.7px #0c8a0c;transform:scaleX(0.66);transform-origin:0 0;">B</span><span style="position:absolute;left:660px;top:426px;font-size:11px;line-height:14px;color:#333;white-space:nowrap;">Scope Creep</span><span style="position:absolute;left:747px;top:422px;font-size:20px;line-height:22px;font-weight:bold;color:#0c8a0c;-webkit-text-stroke:0.7px #0c8a0c;transform:scaleX(0.66);transform-origin:0 0;">C</span><span style="position:absolute;left:785px;top:426px;font-size:11px;line-height:14px;color:#333;white-space:nowrap;">Quote</span><span style="position:absolute;left:857px;top:422px;font-size:20px;line-height:22px;font-weight:bold;color:#2f8fdf;-webkit-text-stroke:0.7px #2f8fdf;transform:scaleX(0.8);transform-origin:0 0;">2</span><span style="position:absolute;left:885px;top:426px;font-size:11px;line-height:14px;color:#333;white-space:nowrap;">Job Detail</span><span style="position:absolute;left:966px;top:422px;font-size:20px;line-height:22px;font-weight:bold;color:#2f8fdf;-webkit-text-stroke:0.7px #2f8fdf;transform:scaleX(0.8);transform-origin:0 0;">3</span><span style="position:absolute;left:991px;top:426px;font-size:11px;line-height:14px;color:#333;white-space:nowrap;">Line History</span><svg style="position:absolute;left:1075px;top:424px" width="17" height="17" viewBox="0 0 17 17"><path d="M9 1.2 H15.8 V8 L8 15.8 L1.2 9z" fill="#2a8ae8" stroke="#2a8ae8" stroke-width="1.4" stroke-linejoin="round"/><rect x="11.5" y="3" width="2.5" height="2.5" fill="#fff"/><path d="M4.2 9 L8 12.8 L11 9.8 L7.2 6z" fill="#fff"/><path d="M5.5 8.2 L9 11.7 M6.6 7.1 L10.1 10.6" stroke="#8fbcea" stroke-width="0.6"/></svg><span style="position:absolute;left:1095px;top:426px;font-size:11px;line-height:14px;color:#333;white-space:nowrap;">Inventory Overview</span><svg style="position:absolute;left:1209px;top:424px" width="17" height="17" viewBox="0 0 17 17"><rect x="1" y="2.5" width="13" height="12" rx="1" fill="#fff" stroke="#222" stroke-width="1.1"/><rect x="1" y="2.5" width="13" height="3.5" fill="#4e22c8"/><rect x="3.2" y="0.8" width="1.6" height="3.2" fill="#222"/><rect x="10.2" y="0.8" width="1.6" height="3.2" fill="#222"/><circle cx="12" cy="12.5" r="4.3" fill="#5a28e0"/><circle cx="12" cy="11" r="1.3" fill="#fff"/><path d="M9.8 14.6 C10 12.8 14 12.8 14.2 14.6z" fill="#fff"/></svg><span style="position:absolute;left:1230px;top:426px;font-size:11px;line-height:14px;color:#333;white-space:nowrap;">Edit Schedule</span><span style="position:absolute;right:27px;top:426px;font-size:11px;line-height:14px;color:#333;white-space:nowrap;">Displaying 1 - 4 of 4</span><div style="position:absolute;left:17px;top:451px;width:1491px;height:24px;background:linear-gradient(#f9f9f9,#e3e4e6);border-bottom:1px solid #d0d0d0;box-sizing:border-box;"></div><div style="position:absolute;left:35px;top:451px;width:1px;height:24px;background:#c5c5c5;box-shadow:1px 0 0 #fdfdfd;"></div><div style="position:absolute;left:17px;top:451px;width:18px;height:24px;overflow:hidden"><span style="position:absolute;left:-5px;top:5px;font-size:11px;line-height:14px;color:#000">#</span></div><div style="position:absolute;left:78px;top:451px;width:1px;height:24px;background:#c5c5c5;box-shadow:1px 0 0 #fdfdfd;"></div><span style="position:absolute;left:42px;top:456px;font-size:11px;line-height:14px;color:#000;white-space:nowrap;">To Inv</span><div style="position:absolute;left:118px;top:451px;width:1px;height:24px;background:#c5c5c5;box-shadow:1px 0 0 #fdfdfd;"></div><span style="position:absolute;left:85px;top:456px;font-size:11px;line-height:14px;color:#000;white-space:nowrap;">Notes</span><div style="position:absolute;left:188px;top:451px;width:1px;height:24px;background:#c5c5c5;box-shadow:1px 0 0 #fdfdfd;"></div><span style="position:absolute;left:125px;top:456px;font-size:11px;line-height:14px;color:#000;white-space:nowrap;">Line Type</span><div style="position:absolute;left:288px;top:451px;width:1px;height:24px;background:#c5c5c5;box-shadow:1px 0 0 #fdfdfd;"></div><span style="position:absolute;left:195px;top:456px;font-size:11px;line-height:14px;color:#000;white-space:nowrap;">Required Date</span><div style="position:absolute;left:388px;top:451px;width:1px;height:24px;background:#c5c5c5;box-shadow:1px 0 0 #fdfdfd;"></div><span style="position:absolute;left:295px;top:456px;font-size:11px;line-height:14px;color:#000;white-space:nowrap;">Job Item Status</span><div style="position:absolute;left:458px;top:451px;width:1px;height:24px;background:#c5c5c5;box-shadow:1px 0 0 #fdfdfd;"></div><span style="position:absolute;left:395px;top:456px;font-size:11px;line-height:14px;color:#000;white-space:nowrap;">QT No</span><div style="position:absolute;left:518px;top:451px;width:1px;height:24px;background:#c5c5c5;box-shadow:1px 0 0 #fdfdfd;"></div><span style="position:absolute;left:465px;top:456px;font-size:11px;line-height:14px;color:#000;white-space:nowrap;">B-Status</span><div style="position:absolute;left:568px;top:451px;width:1px;height:24px;background:#c5c5c5;box-shadow:1px 0 0 #fdfdfd;"></div><span style="position:absolute;left:525px;top:456px;font-size:11px;line-height:14px;color:#000;white-space:nowrap;">Due</span><div style="position:absolute;left:645px;top:451px;width:1px;height:24px;background:#c5c5c5;box-shadow:1px 0 0 #fdfdfd;"></div><span style="position:absolute;left:568px;top:456px;width:77px;text-align:center;font-size:11px;line-height:14px;color:#000;white-space:nowrap;">Days Req</span><div style="position:absolute;left:715px;top:451px;width:1px;height:24px;background:#c5c5c5;box-shadow:1px 0 0 #fdfdfd;"></div><span style="position:absolute;left:652px;top:456px;font-size:11px;line-height:14px;color:#000;white-space:nowrap;">Item Status</span><div style="position:absolute;left:781px;top:451px;width:1px;height:24px;background:#c5c5c5;box-shadow:1px 0 0 #fdfdfd;"></div><span style="position:absolute;left:722px;top:456px;font-size:11px;line-height:14px;color:#000;white-space:nowrap;">Related To</span><div style="position:absolute;left:862px;top:451px;width:1px;height:24px;background:#c5c5c5;box-shadow:1px 0 0 #fdfdfd;"></div><span style="position:absolute;left:788px;top:456px;font-size:11px;line-height:14px;color:#000;white-space:nowrap;">On Hand Qty</span><div style="position:absolute;left:938px;top:451px;width:1px;height:24px;background:#c5c5c5;box-shadow:1px 0 0 #fdfdfd;"></div><span style="position:absolute;left:869px;top:456px;font-size:11px;line-height:14px;color:#000;white-space:nowrap;">Budget Qty</span><div style="position:absolute;left:1006px;top:451px;width:1px;height:24px;background:#c5c5c5;box-shadow:1px 0 0 #fdfdfd;"></div><span style="position:absolute;left:942px;top:456px;width:68px;text-align:center;font-size:11px;line-height:14px;color:#000;white-space:nowrap;">Actual</span><div style="position:absolute;left:1074px;top:451px;width:1px;height:24px;background:#c5c5c5;box-shadow:1px 0 0 #fdfdfd;"></div><span style="position:absolute;left:1006px;top:456px;width:68px;text-align:center;font-size:11px;line-height:14px;color:#000;white-space:nowrap;">Balance</span><div style="position:absolute;left:1141px;top:451px;width:1px;height:24px;background:#c5c5c5;box-shadow:1px 0 0 #fdfdfd;"></div><span style="position:absolute;left:1081px;top:456px;font-size:11px;line-height:14px;color:#000;white-space:nowrap;">Exceeded</span><div style="position:absolute;left:1192px;top:451px;width:1px;height:24px;background:#c5c5c5;box-shadow:1px 0 0 #fdfdfd;"></div><span style="position:absolute;left:1148px;top:456px;font-size:11px;line-height:14px;color:#000;white-space:nowrap;">Est. Qty.</span><div style="position:absolute;left:1292px;top:451px;width:1px;height:24px;background:#c5c5c5;box-shadow:1px 0 0 #fdfdfd;"></div><span style="position:absolute;left:1195px;top:456px;width:100px;text-align:center;font-size:11px;line-height:14px;color:#000;white-space:nowrap;">Delivered Qty</span><div style="position:absolute;left:1365px;top:451px;width:1px;height:24px;background:#c5c5c5;box-shadow:1px 0 0 #fdfdfd;"></div><span style="position:absolute;left:1299px;top:456px;font-size:11px;line-height:14px;color:#000;white-space:nowrap;">Line Status</span><div style="position:absolute;left:1508px;top:451px;width:1px;height:24px;background:#c5c5c5;box-shadow:1px 0 0 #fdfdfd;"></div><span style="position:absolute;left:1372px;top:456px;font-size:11px;line-height:14px;color:#000;white-space:nowrap;">Job Line Description</span><div style="position:absolute;left:36px;top:475px;width:1472px;height:24px;background:#ffa500;border-top:1px dotted #d9cfc0;border-bottom:1px dotted #d9cfc0;box-sizing:border-box;"></div><div style="position:absolute;left:17px;top:475px;width:18px;height:24px;background:#cbdaf0;border-top:1px dotted #a9a9a9;border-bottom:1px dotted #a9a9a9;box-sizing:border-box;"></div><span style="position:absolute;right:1497px;top:478px;font-size:12px;line-height:14px;color:#000;white-space:nowrap;">1</span><div style="position:absolute;left:78px;top:475px;width:1px;height:24px;background:repeating-linear-gradient(#e0d4c0 0 1px,transparent 1px 2px);"></div><div style="position:absolute;left:118px;top:475px;width:1px;height:24px;background:repeating-linear-gradient(#e0d4c0 0 1px,transparent 1px 2px);"></div><div style="position:absolute;left:188px;top:475px;width:1px;height:24px;background:repeating-linear-gradient(#e0d4c0 0 1px,transparent 1px 2px);"></div><div style="position:absolute;left:288px;top:475px;width:1px;height:24px;background:repeating-linear-gradient(#e0d4c0 0 1px,transparent 1px 2px);"></div><div style="position:absolute;left:388px;top:475px;width:1px;height:24px;background:repeating-linear-gradient(#e0d4c0 0 1px,transparent 1px 2px);"></div><div style="position:absolute;left:458px;top:475px;width:1px;height:24px;background:repeating-linear-gradient(#e0d4c0 0 1px,transparent 1px 2px);"></div><div style="position:absolute;left:518px;top:475px;width:1px;height:24px;background:repeating-linear-gradient(#e0d4c0 0 1px,transparent 1px 2px);"></div><div style="position:absolute;left:568px;top:475px;width:1px;height:24px;background:repeating-linear-gradient(#e0d4c0 0 1px,transparent 1px 2px);"></div><div style="position:absolute;left:645px;top:475px;width:1px;height:24px;background:repeating-linear-gradient(#e0d4c0 0 1px,transparent 1px 2px);"></div><div style="position:absolute;left:715px;top:475px;width:1px;height:24px;background:repeating-linear-gradient(#e0d4c0 0 1px,transparent 1px 2px);"></div><div style="position:absolute;left:781px;top:475px;width:1px;height:24px;background:repeating-linear-gradient(#e0d4c0 0 1px,transparent 1px 2px);"></div><div style="position:absolute;left:862px;top:475px;width:1px;height:24px;background:repeating-linear-gradient(#e0d4c0 0 1px,transparent 1px 2px);"></div><div style="position:absolute;left:938px;top:475px;width:1px;height:24px;background:repeating-linear-gradient(#e0d4c0 0 1px,transparent 1px 2px);"></div><div style="position:absolute;left:1006px;top:475px;width:1px;height:24px;background:repeating-linear-gradient(#e0d4c0 0 1px,transparent 1px 2px);"></div><div style="position:absolute;left:1074px;top:475px;width:1px;height:24px;background:repeating-linear-gradient(#e0d4c0 0 1px,transparent 1px 2px);"></div><div style="position:absolute;left:1141px;top:475px;width:1px;height:24px;background:repeating-linear-gradient(#e0d4c0 0 1px,transparent 1px 2px);"></div><div style="position:absolute;left:1192px;top:475px;width:1px;height:24px;background:repeating-linear-gradient(#e0d4c0 0 1px,transparent 1px 2px);"></div><div style="position:absolute;left:1292px;top:475px;width:1px;height:24px;background:repeating-linear-gradient(#e0d4c0 0 1px,transparent 1px 2px);"></div><div style="position:absolute;left:1365px;top:475px;width:1px;height:24px;background:repeating-linear-gradient(#e0d4c0 0 1px,transparent 1px 2px);"></div><svg style="position:absolute;left:46px;top:482px" width="8" height="8" viewBox="0 0 8 8"><circle cx="4" cy="4" r="3" fill="#59b6f0" stroke="#2a96e0" stroke-width="0.8"/><circle cx="4" cy="4" r="1.3" fill="#bfe6ff"/></svg><svg style="position:absolute;left:92px;top:478px" width="14" height="14" viewBox="0 0 14 14"><rect x="0.5" y="0.5" width="13" height="13" rx="1" fill="#fff" stroke="#6d7077"/><rect x="0.5" y="0.5" width="13" height="2.6" fill="#1f3f8f"/><g fill="#fff"><rect x="2" y="1.1" width="1.4" height="0.9"/><rect x="4.5" y="1.1" width="1.4" height="0.9"/><rect x="7" y="1.1" width="1.4" height="0.9"/><rect x="9.5" y="1.1" width="1.4" height="0.9"/></g></svg><span style="position:absolute;left:125px;top:478px;font-size:11px;line-height:14px;color:#000;white-space:nowrap;">Quote</span><span style="position:absolute;left:195px;top:478px;font-size:11px;line-height:14px;color:#000;white-space:nowrap;">2025-10-31</span><svg style="position:absolute;left:295px;top:478px" width="75" height="16" viewBox="0 0 75 16"><rect x="0" y="0" width="75" height="16" fill="#e4e4e4"/><rect x="1" y="1" width="74" height="15" fill="none" stroke="#cfcfcf"/><path d="M3 1.5 L9 7.5 L3 13.5" fill="none" stroke="#a5a5a5" stroke-width="0.8"/><path d="M11 1.5 L17 7.5 L11 13.5" fill="none" stroke="#a5a5a5" stroke-width="0.8"/><path d="M19 1.5 L25 7.5 L19 13.5" fill="none" stroke="#a5a5a5" stroke-width="0.8"/><path d="M27 1.5 L33 7.5 L27 13.5" fill="none" stroke="#a5a5a5" stroke-width="0.8"/><path d="M35 1.5 L41 7.5 L35 13.5" fill="none" stroke="#a5a5a5" stroke-width="0.8"/><path d="M43 1.5 L49 7.5 L43 13.5" fill="none" stroke="#a5a5a5" stroke-width="0.8"/><path d="M51 1.5 L57 7.5 L51 13.5" fill="none" stroke="#a5a5a5" stroke-width="0.8"/><path d="M59 1.5 L65 7.5 L59 13.5" fill="none" stroke="#a5a5a5" stroke-width="0.8"/><path d="M67 1.5 L73 7.5 L67 13.5" fill="none" stroke="#a5a5a5" stroke-width="0.8"/></svg><span style="position:absolute;left:395px;top:478px;font-size:11px;line-height:14px;color:#000;white-space:nowrap;">QT298</span><svg style="position:absolute;left:464px;top:479px" width="18" height="15" viewBox="0 0 18 15"><path d="M9 0.5 L17.3 14.2 H0.7z" fill="#e60000"/></svg><svg style="position:absolute;left:524px;top:477px" width="18" height="18" viewBox="0 0 18 18"><defs><clipPath id="dc0"><circle cx="9" cy="9" r="8"/></clipPath></defs><circle cx="9" cy="9" r="8" fill="#f23a3f"/><path d="M11.6 5 L20 13.4 L17 20 L8.6 13.2z" fill="#c40000" clip-path="url(#dc0)"/><path d="M6 6 H11.6 L8.6 13.2" fill="none" stroke="#fff" stroke-width="2.2" stroke-linejoin="miter"/></svg><span style="position:absolute;right:888px;top:478px;font-size:11px;line-height:14px;color:#e00000;white-space:nowrap;">-5</span><svg style="position:absolute;left:672px;top:479px" width="18" height="16" viewBox="0 0 18 16"><circle cx="7" cy="3.2" r="2.8" fill="#1e8ff5"/><path d="M1.5 14.5 V10 C1.5 7.5 3.5 6.8 7 6.8 C9.5 6.8 11 7.2 11.5 8 L11.5 14.5z" fill="#1e8ff5"/><g transform="translate(13,11)"><circle r="3" fill="#000"/><rect x="-1" y="-4.2" width="2" height="2" fill="#000" transform="rotate(0)"/><rect x="-1" y="-4.2" width="2" height="2" fill="#000" transform="rotate(60)"/><rect x="-1" y="-4.2" width="2" height="2" fill="#000" transform="rotate(120)"/><rect x="-1" y="-4.2" width="2" height="2" fill="#000" transform="rotate(180)"/><rect x="-1" y="-4.2" width="2" height="2" fill="#000" transform="rotate(240)"/><rect x="-1" y="-4.2" width="2" height="2" fill="#000" transform="rotate(300)"/><circle r="1.2" fill="#ffa500"/></g></svg><span style="position:absolute;left:722px;top:478px;font-size:11px;line-height:14px;color:#118811;font-weight:bold;white-space:nowrap;">Service</span><span style="position:absolute;right:596px;top:478px;font-size:11px;line-height:14px;color:#118811;font-weight:bold;white-space:nowrap;">5</span><span style="position:absolute;right:528px;top:478px;font-size:11px;line-height:14px;color:#0a14f0;font-weight:bold;white-space:nowrap;">0</span><span style="position:absolute;right:460px;top:478px;font-size:11px;line-height:14px;color:#000;font-weight:bold;white-space:nowrap;">5</span><span style="position:absolute;right:393px;top:478px;font-size:11px;line-height:14px;color:#000;font-weight:bold;white-space:nowrap;">0</span><span style="position:absolute;right:342px;top:478px;font-size:11px;line-height:14px;color:#000;white-space:nowrap;">5</span><span style="position:absolute;right:242px;top:478px;font-size:11px;line-height:14px;color:#000;font-weight:bold;white-space:nowrap;">0</span><span style="position:absolute;left:1299px;top:478px;font-size:11px;line-height:14px;color:#ee1111;white-space:nowrap;">Not Started</span><span style="position:absolute;left:1372px;top:478px;font-size:11px;line-height:14px;color:#000;white-space:nowrap;">Labour</span><div style="position:absolute;left:36px;top:499px;width:1472px;height:24px;background:#d0d9e7;border-top:1px solid #fafafa;border-bottom:1px solid #ededed;box-sizing:border-box;"></div><div style="position:absolute;left:17px;top:499px;width:18px;height:24px;background:linear-gradient(90deg,#f0f0f0,#e9e9e9);border-bottom:1px solid #fff;border-right:1px solid #d8d8d8;box-sizing:border-box;"></div><span style="position:absolute;right:1497px;top:502px;font-size:12px;line-height:14px;color:#000;white-space:nowrap;">2</span><div style="position:absolute;left:78px;top:499px;width:1px;height:24px;background:#d4d4d4;"></div><div style="position:absolute;left:118px;top:499px;width:1px;height:24px;background:#d4d4d4;"></div><div style="position:absolute;left:188px;top:499px;width:1px;height:24px;background:#d4d4d4;"></div><div style="position:absolute;left:288px;top:499px;width:1px;height:24px;background:#d4d4d4;"></div><div style="position:absolute;left:388px;top:499px;width:1px;height:24px;background:#d4d4d4;"></div><div style="position:absolute;left:458px;top:499px;width:1px;height:24px;background:#d4d4d4;"></div><div style="position:absolute;left:518px;top:499px;width:1px;height:24px;background:#d4d4d4;"></div><div style="position:absolute;left:568px;top:499px;width:1px;height:24px;background:#d4d4d4;"></div><div style="position:absolute;left:645px;top:499px;width:1px;height:24px;background:#d4d4d4;"></div><div style="position:absolute;left:715px;top:499px;width:1px;height:24px;background:#d4d4d4;"></div><div style="position:absolute;left:781px;top:499px;width:1px;height:24px;background:#d4d4d4;"></div><div style="position:absolute;left:862px;top:499px;width:1px;height:24px;background:#d4d4d4;"></div><div style="position:absolute;left:938px;top:499px;width:1px;height:24px;background:#d4d4d4;"></div><div style="position:absolute;left:1006px;top:499px;width:1px;height:24px;background:#d4d4d4;"></div><div style="position:absolute;left:1074px;top:499px;width:1px;height:24px;background:#d4d4d4;"></div><div style="position:absolute;left:1141px;top:499px;width:1px;height:24px;background:#d4d4d4;"></div><div style="position:absolute;left:1192px;top:499px;width:1px;height:24px;background:#d4d4d4;"></div><div style="position:absolute;left:1292px;top:499px;width:1px;height:24px;background:#d4d4d4;"></div><div style="position:absolute;left:1365px;top:499px;width:1px;height:24px;background:#d4d4d4;"></div><svg style="position:absolute;left:46px;top:506px" width="8" height="8" viewBox="0 0 8 8"><circle cx="4" cy="4" r="3" fill="#59b6f0" stroke="#2a96e0" stroke-width="0.8"/><circle cx="4" cy="4" r="1.3" fill="#bfe6ff"/></svg><svg style="position:absolute;left:92px;top:502px" width="14" height="14" viewBox="0 0 14 14"><rect x="0.5" y="0.5" width="13" height="13" rx="1" fill="#fff" stroke="#6d7077"/><rect x="0.5" y="0.5" width="13" height="2.6" fill="#1f3f8f"/><g fill="#fff"><rect x="2" y="1.1" width="1.4" height="0.9"/><rect x="4.5" y="1.1" width="1.4" height="0.9"/><rect x="7" y="1.1" width="1.4" height="0.9"/><rect x="9.5" y="1.1" width="1.4" height="0.9"/></g></svg><span style="position:absolute;left:125px;top:502px;font-size:11px;line-height:14px;color:#000;white-space:nowrap;">Quote</span><span style="position:absolute;left:195px;top:502px;font-size:11px;line-height:14px;color:#000;white-space:nowrap;">2025-10-31</span><svg style="position:absolute;left:295px;top:502px" width="75" height="16" viewBox="0 0 75 16"><rect x="0" y="0" width="75" height="16" fill="#e4e4e4"/><rect x="1" y="1" width="74" height="15" fill="none" stroke="#cfcfcf"/><path d="M3 1.5 L9 7.5 L3 13.5" fill="none" stroke="#a5a5a5" stroke-width="0.8"/><path d="M11 1.5 L17 7.5 L11 13.5" fill="none" stroke="#a5a5a5" stroke-width="0.8"/><path d="M19 1.5 L25 7.5 L19 13.5" fill="none" stroke="#a5a5a5" stroke-width="0.8"/><path d="M27 1.5 L33 7.5 L27 13.5" fill="none" stroke="#a5a5a5" stroke-width="0.8"/><path d="M35 1.5 L41 7.5 L35 13.5" fill="none" stroke="#a5a5a5" stroke-width="0.8"/><path d="M43 1.5 L49 7.5 L43 13.5" fill="none" stroke="#a5a5a5" stroke-width="0.8"/><path d="M51 1.5 L57 7.5 L51 13.5" fill="none" stroke="#a5a5a5" stroke-width="0.8"/><path d="M59 1.5 L65 7.5 L59 13.5" fill="none" stroke="#a5a5a5" stroke-width="0.8"/><path d="M67 1.5 L73 7.5 L67 13.5" fill="none" stroke="#a5a5a5" stroke-width="0.8"/></svg><span style="position:absolute;left:395px;top:502px;font-size:11px;line-height:14px;color:#000;white-space:nowrap;">QT298</span><svg style="position:absolute;left:464px;top:503px" width="18" height="15" viewBox="0 0 18 15"><path d="M9 0.5 L17.3 14.2 H0.7z" fill="#e60000"/></svg><svg style="position:absolute;left:524px;top:501px" width="18" height="18" viewBox="0 0 18 18"><defs><clipPath id="dc1"><circle cx="9" cy="9" r="8"/></clipPath></defs><circle cx="9" cy="9" r="8" fill="#f23a3f"/><path d="M11.6 5 L20 13.4 L17 20 L8.6 13.2z" fill="#c40000" clip-path="url(#dc1)"/><path d="M6 6 H11.6 L8.6 13.2" fill="none" stroke="#fff" stroke-width="2.2" stroke-linejoin="miter"/></svg><span style="position:absolute;right:888px;top:502px;font-size:11px;line-height:14px;color:#e00000;white-space:nowrap;">-5</span><svg style="position:absolute;left:673px;top:500px" width="18" height="19" viewBox="0 0 18 19"><path d="M8 2.3 H15.8 V10 L7 18.5 L0.8 11.8z" fill="#333" stroke="#333" stroke-width="0.9" stroke-linejoin="round"/><rect x="11.2" y="4" width="2.8" height="2.8" fill="#fff"/><path d="M7.5 6 L12 10.3 L7.5 14.8 L3 10.3z" fill="#fff"/><path d="M5.2 9.8 L8.2 12.8 M6.4 8.5 L9.5 11.5" stroke="#b0b0b0" stroke-width="0.6"/></svg><span style="position:absolute;left:722px;top:502px;font-size:11px;line-height:14px;color:#000;white-space:nowrap;">Stock</span><span style="position:absolute;right:672px;top:502px;font-size:11px;line-height:14px;color:#000;white-space:nowrap;">18.00</span><span style="position:absolute;right:596px;top:502px;font-size:11px;line-height:14px;color:#118811;font-weight:bold;white-space:nowrap;">7</span><span style="position:absolute;right:528px;top:502px;font-size:11px;line-height:14px;color:#0a14f0;font-weight:bold;white-space:nowrap;">0</span><span style="position:absolute;right:460px;top:502px;font-size:11px;line-height:14px;color:#000;font-weight:bold;white-space:nowrap;">7</span><span style="position:absolute;right:393px;top:502px;font-size:11px;line-height:14px;color:#000;font-weight:bold;white-space:nowrap;">0</span><span style="position:absolute;right:342px;top:502px;font-size:11px;line-height:14px;color:#000;white-space:nowrap;">7</span><span style="position:absolute;right:242px;top:502px;font-size:11px;line-height:14px;color:#000;font-weight:bold;white-space:nowrap;">0</span><span style="position:absolute;left:1299px;top:502px;font-size:11px;line-height:14px;color:#ee1111;white-space:nowrap;">Not Started</span><span style="position:absolute;left:1372px;top:502px;font-size:11px;line-height:14px;color:#000;white-space:nowrap;">Drink bottle Drink bottle</span><div style="position:absolute;left:36px;top:523px;width:1472px;height:24px;background:#ffffff;border-top:1px solid #fafafa;border-bottom:1px solid #ededed;box-sizing:border-box;"></div><div style="position:absolute;left:17px;top:523px;width:18px;height:24px;background:linear-gradient(90deg,#f0f0f0,#e9e9e9);border-bottom:1px solid #fff;border-right:1px solid #d8d8d8;box-sizing:border-box;"></div><span style="position:absolute;right:1497px;top:526px;font-size:12px;line-height:14px;color:#000;white-space:nowrap;">3</span><div style="position:absolute;left:78px;top:523px;width:1px;height:24px;background:#d4d4d4;"></div><div style="position:absolute;left:118px;top:523px;width:1px;height:24px;background:#d4d4d4;"></div><div style="position:absolute;left:188px;top:523px;width:1px;height:24px;background:#d4d4d4;"></div><div style="position:absolute;left:288px;top:523px;width:1px;height:24px;background:#d4d4d4;"></div><div style="position:absolute;left:388px;top:523px;width:1px;height:24px;background:#d4d4d4;"></div><div style="position:absolute;left:458px;top:523px;width:1px;height:24px;background:#d4d4d4;"></div><div style="position:absolute;left:518px;top:523px;width:1px;height:24px;background:#d4d4d4;"></div><div style="position:absolute;left:568px;top:523px;width:1px;height:24px;background:#d4d4d4;"></div><div style="position:absolute;left:645px;top:523px;width:1px;height:24px;background:#d4d4d4;"></div><div style="position:absolute;left:715px;top:523px;width:1px;height:24px;background:#d4d4d4;"></div><div style="position:absolute;left:781px;top:523px;width:1px;height:24px;background:#d4d4d4;"></div><div style="position:absolute;left:862px;top:523px;width:1px;height:24px;background:#d4d4d4;"></div><div style="position:absolute;left:938px;top:523px;width:1px;height:24px;background:#d4d4d4;"></div><div style="position:absolute;left:1006px;top:523px;width:1px;height:24px;background:#d4d4d4;"></div><div style="position:absolute;left:1074px;top:523px;width:1px;height:24px;background:#d4d4d4;"></div><div style="position:absolute;left:1141px;top:523px;width:1px;height:24px;background:#d4d4d4;"></div><div style="position:absolute;left:1192px;top:523px;width:1px;height:24px;background:#d4d4d4;"></div><div style="position:absolute;left:1292px;top:523px;width:1px;height:24px;background:#d4d4d4;"></div><div style="position:absolute;left:1365px;top:523px;width:1px;height:24px;background:#d4d4d4;"></div><svg style="position:absolute;left:46px;top:530px" width="8" height="8" viewBox="0 0 8 8"><circle cx="4" cy="4" r="3" fill="#59b6f0" stroke="#2a96e0" stroke-width="0.8"/><circle cx="4" cy="4" r="1.3" fill="#bfe6ff"/></svg><svg style="position:absolute;left:92px;top:526px" width="14" height="14" viewBox="0 0 14 14"><rect x="0.5" y="0.5" width="13" height="13" rx="1" fill="#fff" stroke="#6d7077"/><rect x="0.5" y="0.5" width="13" height="2.6" fill="#1f3f8f"/><g fill="#fff"><rect x="2" y="1.1" width="1.4" height="0.9"/><rect x="4.5" y="1.1" width="1.4" height="0.9"/><rect x="7" y="1.1" width="1.4" height="0.9"/><rect x="9.5" y="1.1" width="1.4" height="0.9"/></g></svg><span style="position:absolute;left:125px;top:526px;font-size:11px;line-height:14px;color:#000;white-space:nowrap;">Quote</span><span style="position:absolute;left:195px;top:526px;font-size:11px;line-height:14px;color:#000;white-space:nowrap;">2025-10-31</span><svg style="position:absolute;left:295px;top:526px" width="75" height="16" viewBox="0 0 75 16"><rect x="0" y="0" width="75" height="16" fill="#e4e4e4"/><rect x="1" y="1" width="74" height="15" fill="none" stroke="#cfcfcf"/><path d="M3 1.5 L9 7.5 L3 13.5" fill="none" stroke="#a5a5a5" stroke-width="0.8"/><path d="M11 1.5 L17 7.5 L11 13.5" fill="none" stroke="#a5a5a5" stroke-width="0.8"/><path d="M19 1.5 L25 7.5 L19 13.5" fill="none" stroke="#a5a5a5" stroke-width="0.8"/><path d="M27 1.5 L33 7.5 L27 13.5" fill="none" stroke="#a5a5a5" stroke-width="0.8"/><path d="M35 1.5 L41 7.5 L35 13.5" fill="none" stroke="#a5a5a5" stroke-width="0.8"/><path d="M43 1.5 L49 7.5 L43 13.5" fill="none" stroke="#a5a5a5" stroke-width="0.8"/><path d="M51 1.5 L57 7.5 L51 13.5" fill="none" stroke="#a5a5a5" stroke-width="0.8"/><path d="M59 1.5 L65 7.5 L59 13.5" fill="none" stroke="#a5a5a5" stroke-width="0.8"/><path d="M67 1.5 L73 7.5 L67 13.5" fill="none" stroke="#a5a5a5" stroke-width="0.8"/></svg><span style="position:absolute;left:395px;top:526px;font-size:11px;line-height:14px;color:#000;white-space:nowrap;">QT298</span><svg style="position:absolute;left:464px;top:527px" width="18" height="15" viewBox="0 0 18 15"><path d="M9 0.5 L17.3 14.2 H0.7z" fill="#e60000"/></svg><svg style="position:absolute;left:524px;top:525px" width="18" height="18" viewBox="0 0 18 18"><defs><clipPath id="dc2"><circle cx="9" cy="9" r="8"/></clipPath></defs><circle cx="9" cy="9" r="8" fill="#f23a3f"/><path d="M11.6 5 L20 13.4 L17 20 L8.6 13.2z" fill="#c40000" clip-path="url(#dc2)"/><path d="M6 6 H11.6 L8.6 13.2" fill="none" stroke="#fff" stroke-width="2.2" stroke-linejoin="miter"/></svg><span style="position:absolute;right:888px;top:526px;font-size:11px;line-height:14px;color:#e00000;white-space:nowrap;">-5</span><svg style="position:absolute;left:673px;top:524px" width="18" height="19" viewBox="0 0 18 19"><path d="M8 2.3 H15.8 V10 L7 18.5 L0.8 11.8z" fill="#333" stroke="#333" stroke-width="0.9" stroke-linejoin="round"/><rect x="11.2" y="4" width="2.8" height="2.8" fill="#fff"/><path d="M7.5 6 L12 10.3 L7.5 14.8 L3 10.3z" fill="#fff"/><path d="M5.2 9.8 L8.2 12.8 M6.4 8.5 L9.5 11.5" stroke="#b0b0b0" stroke-width="0.6"/></svg><span style="position:absolute;left:722px;top:526px;font-size:11px;line-height:14px;color:#000;white-space:nowrap;">Stock</span><span style="position:absolute;right:672px;top:526px;font-size:11px;line-height:14px;color:#000;white-space:nowrap;">21.00</span><span style="position:absolute;right:596px;top:526px;font-size:11px;line-height:14px;color:#118811;font-weight:bold;white-space:nowrap;">4</span><span style="position:absolute;right:528px;top:526px;font-size:11px;line-height:14px;color:#0a14f0;font-weight:bold;white-space:nowrap;">0</span><span style="position:absolute;right:460px;top:526px;font-size:11px;line-height:14px;color:#000;font-weight:bold;white-space:nowrap;">4</span><span style="position:absolute;right:393px;top:526px;font-size:11px;line-height:14px;color:#000;font-weight:bold;white-space:nowrap;">0</span><span style="position:absolute;right:342px;top:526px;font-size:11px;line-height:14px;color:#000;white-space:nowrap;">4</span><span style="position:absolute;right:242px;top:526px;font-size:11px;line-height:14px;color:#000;font-weight:bold;white-space:nowrap;">0</span><span style="position:absolute;left:1299px;top:526px;font-size:11px;line-height:14px;color:#ee1111;white-space:nowrap;">Not Started</span><span style="position:absolute;left:1372px;top:526px;font-size:11px;line-height:14px;color:#000;white-space:nowrap;">Book Red</span><div style="position:absolute;left:36px;top:547px;width:1472px;height:24px;background:#d0d9e7;border-top:1px solid #fafafa;border-bottom:1px solid #ededed;box-sizing:border-box;"></div><div style="position:absolute;left:17px;top:547px;width:18px;height:24px;background:linear-gradient(90deg,#f0f0f0,#e9e9e9);border-bottom:1px solid #fff;border-right:1px solid #d8d8d8;box-sizing:border-box;"></div><span style="position:absolute;right:1497px;top:550px;font-size:12px;line-height:14px;color:#000;white-space:nowrap;">4</span><div style="position:absolute;left:78px;top:547px;width:1px;height:24px;background:#d4d4d4;"></div><div style="position:absolute;left:118px;top:547px;width:1px;height:24px;background:#d4d4d4;"></div><div style="position:absolute;left:188px;top:547px;width:1px;height:24px;background:#d4d4d4;"></div><div style="position:absolute;left:288px;top:547px;width:1px;height:24px;background:#d4d4d4;"></div><div style="position:absolute;left:388px;top:547px;width:1px;height:24px;background:#d4d4d4;"></div><div style="position:absolute;left:458px;top:547px;width:1px;height:24px;background:#d4d4d4;"></div><div style="position:absolute;left:518px;top:547px;width:1px;height:24px;background:#d4d4d4;"></div><div style="position:absolute;left:568px;top:547px;width:1px;height:24px;background:#d4d4d4;"></div><div style="position:absolute;left:645px;top:547px;width:1px;height:24px;background:#d4d4d4;"></div><div style="position:absolute;left:715px;top:547px;width:1px;height:24px;background:#d4d4d4;"></div><div style="position:absolute;left:781px;top:547px;width:1px;height:24px;background:#d4d4d4;"></div><div style="position:absolute;left:862px;top:547px;width:1px;height:24px;background:#d4d4d4;"></div><div style="position:absolute;left:938px;top:547px;width:1px;height:24px;background:#d4d4d4;"></div><div style="position:absolute;left:1006px;top:547px;width:1px;height:24px;background:#d4d4d4;"></div><div style="position:absolute;left:1074px;top:547px;width:1px;height:24px;background:#d4d4d4;"></div><div style="position:absolute;left:1141px;top:547px;width:1px;height:24px;background:#d4d4d4;"></div><div style="position:absolute;left:1192px;top:547px;width:1px;height:24px;background:#d4d4d4;"></div><div style="position:absolute;left:1292px;top:547px;width:1px;height:24px;background:#d4d4d4;"></div><div style="position:absolute;left:1365px;top:547px;width:1px;height:24px;background:#d4d4d4;"></div><svg style="position:absolute;left:46px;top:554px" width="8" height="8" viewBox="0 0 8 8"><circle cx="4" cy="4" r="3" fill="#59b6f0" stroke="#2a96e0" stroke-width="0.8"/><circle cx="4" cy="4" r="1.3" fill="#bfe6ff"/></svg><svg style="position:absolute;left:92px;top:550px" width="14" height="14" viewBox="0 0 14 14"><rect x="0.5" y="0.5" width="13" height="13" rx="1" fill="#fff" stroke="#6d7077"/><rect x="0.5" y="0.5" width="13" height="2.6" fill="#1f3f8f"/><g fill="#fff"><rect x="2" y="1.1" width="1.4" height="0.9"/><rect x="4.5" y="1.1" width="1.4" height="0.9"/><rect x="7" y="1.1" width="1.4" height="0.9"/><rect x="9.5" y="1.1" width="1.4" height="0.9"/></g></svg><span style="position:absolute;left:125px;top:550px;font-size:11px;line-height:14px;color:#000;white-space:nowrap;">Quote</span><span style="position:absolute;left:195px;top:550px;font-size:11px;line-height:14px;color:#000;white-space:nowrap;">2025-11-04</span><svg style="position:absolute;left:295px;top:550px" width="75" height="16" viewBox="0 0 75 16"><rect x="0" y="0" width="75" height="16" fill="#e4e4e4"/><rect x="1" y="1" width="74" height="15" fill="none" stroke="#cfcfcf"/><path d="M3 1.5 L9 7.5 L3 13.5" fill="none" stroke="#a5a5a5" stroke-width="0.8"/><path d="M11 1.5 L17 7.5 L11 13.5" fill="none" stroke="#a5a5a5" stroke-width="0.8"/><path d="M19 1.5 L25 7.5 L19 13.5" fill="none" stroke="#a5a5a5" stroke-width="0.8"/><path d="M27 1.5 L33 7.5 L27 13.5" fill="none" stroke="#a5a5a5" stroke-width="0.8"/><path d="M35 1.5 L41 7.5 L35 13.5" fill="none" stroke="#a5a5a5" stroke-width="0.8"/><path d="M43 1.5 L49 7.5 L43 13.5" fill="none" stroke="#a5a5a5" stroke-width="0.8"/><path d="M51 1.5 L57 7.5 L51 13.5" fill="none" stroke="#a5a5a5" stroke-width="0.8"/><path d="M59 1.5 L65 7.5 L59 13.5" fill="none" stroke="#a5a5a5" stroke-width="0.8"/><path d="M67 1.5 L73 7.5 L67 13.5" fill="none" stroke="#a5a5a5" stroke-width="0.8"/></svg><span style="position:absolute;left:395px;top:550px;font-size:11px;line-height:14px;color:#000;white-space:nowrap;">QT298</span><svg style="position:absolute;left:464px;top:551px" width="18" height="15" viewBox="0 0 18 15"><path d="M9 0.5 L17.3 14.2 H0.7z" fill="#e60000"/></svg><svg style="position:absolute;left:524px;top:549px" width="18" height="18" viewBox="0 0 18 18"><defs><clipPath id="dc3"><circle cx="9" cy="9" r="8"/></clipPath></defs><circle cx="9" cy="9" r="8" fill="#f23a3f"/><path d="M11.6 5 L20 13.4 L17 20 L8.6 13.2z" fill="#c40000" clip-path="url(#dc3)"/><path d="M6 6 H11.6 L8.6 13.2" fill="none" stroke="#fff" stroke-width="2.2" stroke-linejoin="miter"/></svg><span style="position:absolute;right:888px;top:550px;font-size:11px;line-height:14px;color:#e00000;white-space:nowrap;">-1</span><svg style="position:absolute;left:672px;top:551px" width="18" height="16" viewBox="0 0 18 16"><circle cx="7" cy="3.2" r="2.8" fill="#1e8ff5"/><path d="M1.5 14.5 V10 C1.5 7.5 3.5 6.8 7 6.8 C9.5 6.8 11 7.2 11.5 8 L11.5 14.5z" fill="#1e8ff5"/><g transform="translate(13,11)"><circle r="3" fill="#000"/><rect x="-1" y="-4.2" width="2" height="2" fill="#000" transform="rotate(0)"/><rect x="-1" y="-4.2" width="2" height="2" fill="#000" transform="rotate(60)"/><rect x="-1" y="-4.2" width="2" height="2" fill="#000" transform="rotate(120)"/><rect x="-1" y="-4.2" width="2" height="2" fill="#000" transform="rotate(180)"/><rect x="-1" y="-4.2" width="2" height="2" fill="#000" transform="rotate(240)"/><rect x="-1" y="-4.2" width="2" height="2" fill="#000" transform="rotate(300)"/><circle r="1.2" fill="#ffa500"/></g></svg><span style="position:absolute;left:722px;top:550px;font-size:11px;line-height:14px;color:#118811;font-weight:bold;white-space:nowrap;">Service</span><span style="position:absolute;right:596px;top:550px;font-size:11px;line-height:14px;color:#118811;font-weight:bold;white-space:nowrap;">4</span><span style="position:absolute;right:528px;top:550px;font-size:11px;line-height:14px;color:#0a14f0;font-weight:bold;white-space:nowrap;">0</span><span style="position:absolute;right:460px;top:550px;font-size:11px;line-height:14px;color:#000;font-weight:bold;white-space:nowrap;">4</span><span style="position:absolute;right:393px;top:550px;font-size:11px;line-height:14px;color:#000;font-weight:bold;white-space:nowrap;">0</span><span style="position:absolute;right:342px;top:550px;font-size:11px;line-height:14px;color:#000;white-space:nowrap;">4</span><span style="position:absolute;right:242px;top:550px;font-size:11px;line-height:14px;color:#000;font-weight:bold;white-space:nowrap;">0</span><span style="position:absolute;left:1299px;top:550px;font-size:11px;line-height:14px;color:#ee1111;white-space:nowrap;">Not Started</span><span style="position:absolute;left:1372px;top:550px;font-size:11px;line-height:14px;color:#000;white-space:nowrap;">Contract Service Item PTT</span><div style="position:absolute;left:17px;top:637px;width:1491px;height:15px;background:#fafafa;"></div><svg style="position:absolute;left:22px;top:640px" width="8" height="10" viewBox="0 0 8 10"><path d="M7 0.5 V9.5 L1 5z" fill="#8a8a8a"/></svg><div style="position:absolute;left:40px;top:640px;width:361px;height:9px;background:#8a8a8a;border-radius:5px;"></div><svg style="position:absolute;left:1495px;top:640px" width="8" height="10" viewBox="0 0 8 10"><path d="M1 0.5 V9.5 L7 5z" fill="#8a8a8a"/></svg><div style="position:absolute;left:31px;top:449px;width:1479px;height:30px;border:3px solid #e60000;box-sizing:border-box;"></div>
</body></html>
